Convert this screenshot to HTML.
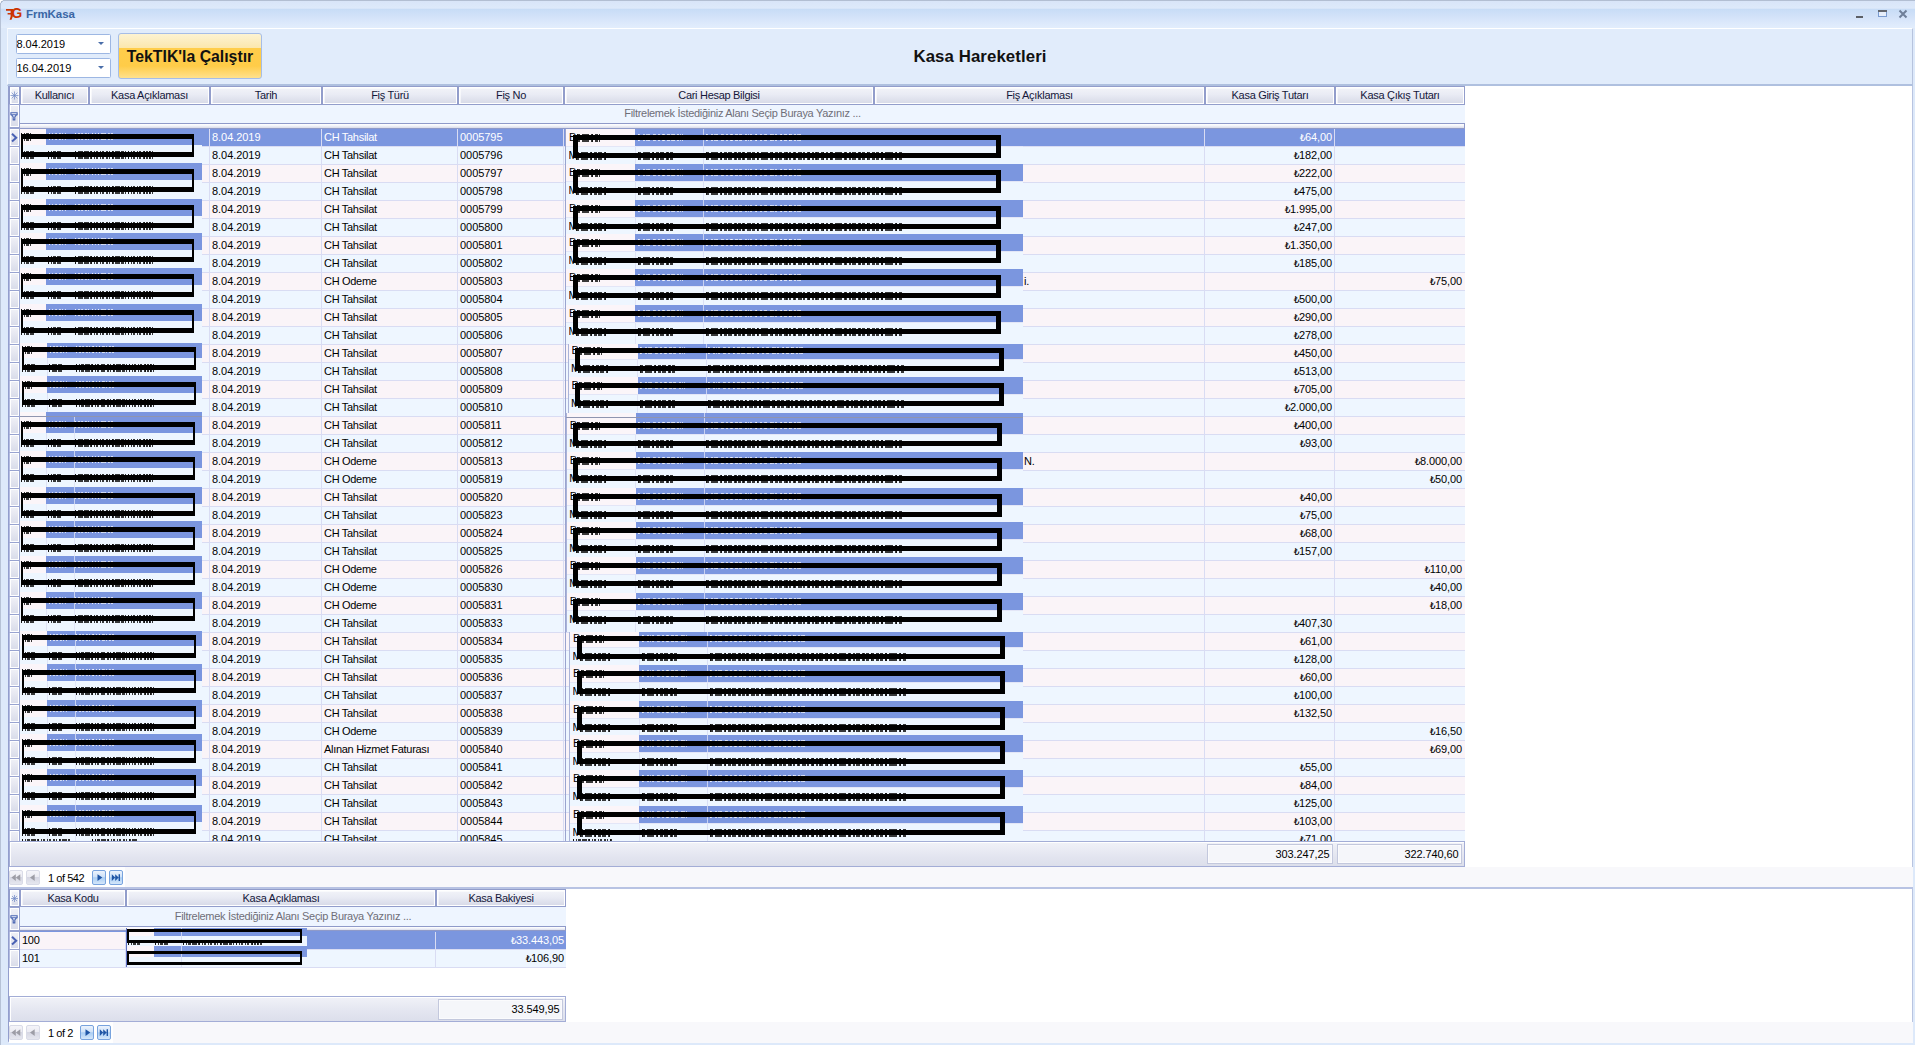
<!DOCTYPE html><html lang="tr"><head><meta charset="utf-8"><title>FrmKasa</title><style>
*{box-sizing:border-box;margin:0;padding:0}
html,body{width:1915px;height:1045px;overflow:hidden}
body{position:relative;background:#dde9fa;font-family:"Liberation Sans","DejaVu Sans",sans-serif;font-size:11px;color:#000;letter-spacing:-0.3px}
.abs{position:absolute}
#frameT{left:0;top:0;width:1915px;height:9px;background:linear-gradient(#b2bed2 0,#b2bed2 1px,#d9e5f8 1px,#dde9fa 8px,#d2e1f7 9px)}
#title{left:1px;top:9px;width:1914px;height:19px;background:linear-gradient(#c7dcf6 0,#d4e3f9 45%,#dfebfc 85%,#e2edfc 100%)}
#frameL{left:0;top:0;width:1px;height:1045px;background:#b6c2d6}
#ttl{left:26px;top:8px;font-weight:bold;font-size:11.5px;color:#3a66a5;letter-spacing:-0.05px}
#panel{left:7px;top:28px;width:1906px;height:58px;background:#e1ecfb;border-top:1px solid #fff;border-left:1px solid #f4f8fe;border-right:1px solid #b7c3dd;border-bottom:2px solid #afc0df}
.date{left:16px;width:95px;height:20px;background:#fff;border:1px solid #9db7e3;border-radius:1.5px;font-size:11px;line-height:18px;padding-left:0;text-indent:-0.6px;letter-spacing:-0.02px}
.date i{position:absolute;right:6px;top:7px;width:0;height:0;border-left:3px solid transparent;border-right:3px solid transparent;border-top:3.5px solid #4a6ea9}
#btn{left:118px;top:33px;width:144px;height:46px;border:1px solid #a6bde6;border-radius:3px;background:linear-gradient(#fdf3d2 0,#fbe7ae 14px,#ffcd4b 14.5px,#ffcc48 32px,#ffe18d 44px);font-weight:bold;font-size:15.8px;letter-spacing:0;text-align:center;line-height:45px;color:#111}
#h1{left:780px;top:47px;width:400px;text-align:center;font-weight:bold;font-size:16.8px;letter-spacing:0.1px;color:#111;line-height:20px}
#main{left:8px;top:86px;width:1905px;height:956px;background:#fff;border-left:1px solid #939ecd;border-right:1px solid #b9c4e0;border-bottom:1px solid #b9c4e0}
.hd{top:86px;height:19px;border:1px solid #929dcb;background:linear-gradient(#f3f4f9,#e9ebf4 45%,#d6d9e7);text-align:center;line-height:17px;color:#14173a;box-shadow:inset 0 0 0 1px #fff,inset 1px 1px 0 1px rgba(255,255,255,.6)}
.flt{height:19px;background:#eef5ff;color:#6e6e78;text-align:center;line-height:18px}
.ind{left:9px;width:11px;background:linear-gradient(#f0f1f7,#d8dbe9);border:1px solid #98a3d0;border-left-color:#b4bce0;box-shadow:inset 0 0 0 1px #fff}
.r{left:20px;height:18px;border-top:1px solid #d9dcf3;width:1445px}
.r.e{background:#faf4f8}
.r.o{background:#eef6ff}
.r.s{background:#7b96df;color:#fff;border-top-color:#7b96df}
.c{position:absolute;top:0;height:17px;line-height:17px;border-left:1px solid #d9dcf3;padding:0 2px;white-space:nowrap;overflow:hidden}
.c.n{text-align:right;padding-right:2px;letter-spacing:-0.1px}
.c.d{letter-spacing:-0.05px}
.lira{font-size:9px;letter-spacing:-0.5px}
.ft{background:linear-gradient(#f1f2f8,#e3e5f0 60%,#dcdfeb);border:1px solid #a3add6;box-shadow:inset 1px 1px 0 #fff}
.sum{background:#f5f6fa;border:1px solid #c3c8dd;text-align:right;line-height:18px;padding-right:2.5px;letter-spacing:-0.1px;height:20px;box-shadow:inset 0 0 0 1px #fbfbfd}
.nav{background:#f8f8fb;height:21px}
.nb{top:3px;width:14px;height:15px;border:1px solid #d9dbe7;border-radius:2px;background:linear-gradient(#f4f4f9 0,#ececf3 45%,#d6d7e3 50%,#e6e7ef 100%)}
.nb.a{border-color:#78a3de;background:linear-gradient(#ecf3fd 0,#cfe2f8 45%,#a9cdf3 52%,#d5e7fa 100%)}
.nb svg{position:absolute;left:0;top:0}
.dk{background:repeating-linear-gradient(90deg,rgba(12,12,12,.82) 0,rgba(12,12,12,.82) 1.4px,transparent 1.4px,transparent 3.1px),repeating-linear-gradient(90deg,rgba(12,12,12,.82) 0,rgba(12,12,12,.82) 1px,transparent 1px,transparent 5.3px)}
.wh{background:repeating-linear-gradient(90deg,rgba(255,255,255,.7) 0,rgba(255,255,255,.7) 1.2px,transparent 1.2px,transparent 3.3px),repeating-linear-gradient(90deg,rgba(255,255,255,.6) 0,rgba(255,255,255,.6) 1px,transparent 1px,transparent 5.7px)}
.dk2{background:repeating-linear-gradient(90deg,rgba(12,12,12,.82) 0,rgba(12,12,12,.82) 2.6px,transparent 2.6px,transparent 4.6px),repeating-linear-gradient(90deg,rgba(12,12,12,.82) 0,rgba(12,12,12,.82) 1.4px,transparent 1.4px,transparent 7.3px)}
.wh2{background:repeating-linear-gradient(90deg,rgba(255,255,255,.7) 0,rgba(255,255,255,.7) 2.2px,transparent 2.2px,transparent 4.9px),repeating-linear-gradient(90deg,rgba(255,255,255,.6) 0,rgba(255,255,255,.6) 1.2px,transparent 1.2px,transparent 8.3px)}
.blk{position:absolute;border-style:solid;border-color:#000}
.pt{position:absolute;overflow:hidden}
</style></head><body>
<div class="abs" id="frameT"></div><div class="abs" id="title"></div><div class="abs" id="frameL"></div>
<svg class="abs" style="left:5px;top:7px" width="18" height="14" viewBox="0 0 18 14"><text x="6.6" y="11.2" font-family="Liberation Sans,sans-serif" font-weight="bold" font-size="13.8" fill="#cc3300" letter-spacing="0">G</text><path d="M1 2h7v1.7H1zM2.6 6h5.4v1.6H2.6zM5.6 2h2.2v7.6l-1.3 3.2H4.6l1-3.2z" fill="#cc3300"/></svg>
<div class="abs" style="left:0;top:0;width:5px;height:5px;background:radial-gradient(circle at 5px 5px,rgba(255,255,255,0) 4px,#b2bed2 4px,#b2bed2 5px,#fff 5.2px)"></div>
<div class="abs" id="ttl">FrmKasa</div>
<svg class="abs" style="left:1850px;top:8px" width="62" height="14" viewBox="0 0 62 14"><rect x="6" y="8" width="7" height="2" fill="#5c5f66"/><rect x="28.5" y="2.5" width="8" height="6" fill="#e6eefb" stroke="#7a9bd0"/><rect x="28" y="2" width="9" height="2" fill="#62666e"/><path d="M49.5 2.5l7 7M56.5 2.5l-7 7" stroke="#6f7f99" stroke-width="2" fill="none"/></svg>
<div class="abs" id="panel"></div>
<div class="abs date" style="top:34px">8.04.2019<i></i></div>
<div class="abs date" style="top:58px">16.04.2019<i></i></div>
<div class="abs" id="btn">TekTIK'la Çalıştır</div>
<div class="abs" id="h1">Kasa Hareketleri</div>
<div class="abs" id="main"></div>
<div class="abs hd" style="left:9px;width:11px"></div>
<svg class="abs" style="left:10px;top:91px" width="9" height="9" viewBox="0 0 9 9"><path d="M4.5 0.5v8M0.5 4.5h8M1.6 1.6l5.8 5.8M7.4 1.6L1.6 7.4" stroke="#6f88c4" stroke-width="0.7" fill="none"/></svg>
<div class="abs hd" style="left:20px;width:69px">Kullanıcı</div>
<div class="abs hd" style="left:89px;width:121px">Kasa Açıklaması</div>
<div class="abs hd" style="left:210px;width:112px">Tarih</div>
<div class="abs hd" style="left:322px;width:136px">Fiş Türü</div>
<div class="abs hd" style="left:458px;width:106px">Fiş No</div>
<div class="abs hd" style="left:564px;width:310px">Cari Hesap Bilgisi</div>
<div class="abs hd" style="left:874px;width:331px">Fiş Açıklaması</div>
<div class="abs hd" style="left:1205px;width:130px">Kasa Giriş Tutarı</div>
<div class="abs hd" style="left:1335px;width:130px">Kasa Çıkış Tutarı</div>
<div class="abs ind" style="top:104px;height:24px"></div>
<svg class="abs" style="left:9.8px;top:111px" width="8" height="10" viewBox="0 0 8 10"><path d="M0.9 1.7h6.2v2h-6.2zM1.3 3.7l1.9 2.3v2.8h1.6v-2.8l1.9-2.3" fill="#f4f6fc" stroke="#4a66b2" stroke-width="1.15"/></svg>
<div class="abs flt" style="left:20px;top:105px;width:1445px;height:18px;line-height:16px">Filtrelemek İstediğiniz Alanı Seçip Buraya Yazınız ...</div>
<div class="abs" style="left:9px;top:128px;width:1456px;height:713px;overflow:hidden">
<div class="abs ind" style="left:0;top:0px;height:19px"></div>
<div class="abs r s" style="left:11px;top:0px"><div class="c" style="left:0px;width:68px;border-left:0"></div><div class="c" style="left:68px;width:121px"></div><div class="c d" style="left:189px;width:112px">8.04.2019</div><div class="c" style="left:301px;width:136px">CH Tahsilat</div><div class="c d" style="left:437px;width:106px">0005795</div><div class="c" style="left:543px;width:310px"></div><div class="c" style="left:853px;width:331px"></div><div class="c n" style="left:1184px;width:130px"><span class="lira">₺</span>64,00</div><div class="c n" style="left:1314px;width:130px"></div></div>
<div class="abs ind" style="left:0;top:18px;height:19px"></div>
<div class="abs r o" style="left:11px;top:18px"><div class="c" style="left:0px;width:68px;border-left:0"></div><div class="c" style="left:68px;width:121px"></div><div class="c d" style="left:189px;width:112px">8.04.2019</div><div class="c" style="left:301px;width:136px">CH Tahsilat</div><div class="c d" style="left:437px;width:106px">0005796</div><div class="c" style="left:543px;width:310px"></div><div class="c" style="left:853px;width:331px"></div><div class="c n" style="left:1184px;width:130px"><span class="lira">₺</span>182,00</div><div class="c n" style="left:1314px;width:130px"></div></div>
<div class="abs ind" style="left:0;top:36px;height:19px"></div>
<div class="abs r e" style="left:11px;top:36px"><div class="c" style="left:0px;width:68px;border-left:0"></div><div class="c" style="left:68px;width:121px"></div><div class="c d" style="left:189px;width:112px">8.04.2019</div><div class="c" style="left:301px;width:136px">CH Tahsilat</div><div class="c d" style="left:437px;width:106px">0005797</div><div class="c" style="left:543px;width:310px"></div><div class="c" style="left:853px;width:331px"></div><div class="c n" style="left:1184px;width:130px"><span class="lira">₺</span>222,00</div><div class="c n" style="left:1314px;width:130px"></div></div>
<div class="abs ind" style="left:0;top:54px;height:19px"></div>
<div class="abs r o" style="left:11px;top:54px"><div class="c" style="left:0px;width:68px;border-left:0"></div><div class="c" style="left:68px;width:121px"></div><div class="c d" style="left:189px;width:112px">8.04.2019</div><div class="c" style="left:301px;width:136px">CH Tahsilat</div><div class="c d" style="left:437px;width:106px">0005798</div><div class="c" style="left:543px;width:310px"></div><div class="c" style="left:853px;width:331px"></div><div class="c n" style="left:1184px;width:130px"><span class="lira">₺</span>475,00</div><div class="c n" style="left:1314px;width:130px"></div></div>
<div class="abs ind" style="left:0;top:72px;height:19px"></div>
<div class="abs r e" style="left:11px;top:72px"><div class="c" style="left:0px;width:68px;border-left:0"></div><div class="c" style="left:68px;width:121px"></div><div class="c d" style="left:189px;width:112px">8.04.2019</div><div class="c" style="left:301px;width:136px">CH Tahsilat</div><div class="c d" style="left:437px;width:106px">0005799</div><div class="c" style="left:543px;width:310px"></div><div class="c" style="left:853px;width:331px"></div><div class="c n" style="left:1184px;width:130px"><span class="lira">₺</span>1.995,00</div><div class="c n" style="left:1314px;width:130px"></div></div>
<div class="abs ind" style="left:0;top:90px;height:19px"></div>
<div class="abs r o" style="left:11px;top:90px"><div class="c" style="left:0px;width:68px;border-left:0"></div><div class="c" style="left:68px;width:121px"></div><div class="c d" style="left:189px;width:112px">8.04.2019</div><div class="c" style="left:301px;width:136px">CH Tahsilat</div><div class="c d" style="left:437px;width:106px">0005800</div><div class="c" style="left:543px;width:310px"></div><div class="c" style="left:853px;width:331px"></div><div class="c n" style="left:1184px;width:130px"><span class="lira">₺</span>247,00</div><div class="c n" style="left:1314px;width:130px"></div></div>
<div class="abs ind" style="left:0;top:108px;height:19px"></div>
<div class="abs r e" style="left:11px;top:108px"><div class="c" style="left:0px;width:68px;border-left:0"></div><div class="c" style="left:68px;width:121px"></div><div class="c d" style="left:189px;width:112px">8.04.2019</div><div class="c" style="left:301px;width:136px">CH Tahsilat</div><div class="c d" style="left:437px;width:106px">0005801</div><div class="c" style="left:543px;width:310px"></div><div class="c" style="left:853px;width:331px"></div><div class="c n" style="left:1184px;width:130px"><span class="lira">₺</span>1.350,00</div><div class="c n" style="left:1314px;width:130px"></div></div>
<div class="abs ind" style="left:0;top:126px;height:19px"></div>
<div class="abs r o" style="left:11px;top:126px"><div class="c" style="left:0px;width:68px;border-left:0"></div><div class="c" style="left:68px;width:121px"></div><div class="c d" style="left:189px;width:112px">8.04.2019</div><div class="c" style="left:301px;width:136px">CH Tahsilat</div><div class="c d" style="left:437px;width:106px">0005802</div><div class="c" style="left:543px;width:310px"></div><div class="c" style="left:853px;width:331px"></div><div class="c n" style="left:1184px;width:130px"><span class="lira">₺</span>185,00</div><div class="c n" style="left:1314px;width:130px"></div></div>
<div class="abs ind" style="left:0;top:144px;height:19px"></div>
<div class="abs r e" style="left:11px;top:144px"><div class="c" style="left:0px;width:68px;border-left:0"></div><div class="c" style="left:68px;width:121px"></div><div class="c d" style="left:189px;width:112px">8.04.2019</div><div class="c" style="left:301px;width:136px">CH Odeme</div><div class="c d" style="left:437px;width:106px">0005803</div><div class="c" style="left:543px;width:310px"></div><div class="c" style="left:853px;width:331px"></div><div class="c n" style="left:1184px;width:130px"></div><div class="c n" style="left:1314px;width:130px"><span class="lira">₺</span>75,00</div></div>
<div class="abs ind" style="left:0;top:162px;height:19px"></div>
<div class="abs r o" style="left:11px;top:162px"><div class="c" style="left:0px;width:68px;border-left:0"></div><div class="c" style="left:68px;width:121px"></div><div class="c d" style="left:189px;width:112px">8.04.2019</div><div class="c" style="left:301px;width:136px">CH Tahsilat</div><div class="c d" style="left:437px;width:106px">0005804</div><div class="c" style="left:543px;width:310px"></div><div class="c" style="left:853px;width:331px"></div><div class="c n" style="left:1184px;width:130px"><span class="lira">₺</span>500,00</div><div class="c n" style="left:1314px;width:130px"></div></div>
<div class="abs ind" style="left:0;top:180px;height:19px"></div>
<div class="abs r e" style="left:11px;top:180px"><div class="c" style="left:0px;width:68px;border-left:0"></div><div class="c" style="left:68px;width:121px"></div><div class="c d" style="left:189px;width:112px">8.04.2019</div><div class="c" style="left:301px;width:136px">CH Tahsilat</div><div class="c d" style="left:437px;width:106px">0005805</div><div class="c" style="left:543px;width:310px"></div><div class="c" style="left:853px;width:331px"></div><div class="c n" style="left:1184px;width:130px"><span class="lira">₺</span>290,00</div><div class="c n" style="left:1314px;width:130px"></div></div>
<div class="abs ind" style="left:0;top:198px;height:19px"></div>
<div class="abs r o" style="left:11px;top:198px"><div class="c" style="left:0px;width:68px;border-left:0"></div><div class="c" style="left:68px;width:121px"></div><div class="c d" style="left:189px;width:112px">8.04.2019</div><div class="c" style="left:301px;width:136px">CH Tahsilat</div><div class="c d" style="left:437px;width:106px">0005806</div><div class="c" style="left:543px;width:310px"></div><div class="c" style="left:853px;width:331px"></div><div class="c n" style="left:1184px;width:130px"><span class="lira">₺</span>278,00</div><div class="c n" style="left:1314px;width:130px"></div></div>
<div class="abs ind" style="left:0;top:216px;height:19px"></div>
<div class="abs r e" style="left:11px;top:216px"><div class="c" style="left:0px;width:68px;border-left:0"></div><div class="c" style="left:68px;width:121px"></div><div class="c d" style="left:189px;width:112px">8.04.2019</div><div class="c" style="left:301px;width:136px">CH Tahsilat</div><div class="c d" style="left:437px;width:106px">0005807</div><div class="c" style="left:543px;width:310px"></div><div class="c" style="left:853px;width:331px"></div><div class="c n" style="left:1184px;width:130px"><span class="lira">₺</span>450,00</div><div class="c n" style="left:1314px;width:130px"></div></div>
<div class="abs ind" style="left:0;top:234px;height:19px"></div>
<div class="abs r o" style="left:11px;top:234px"><div class="c" style="left:0px;width:68px;border-left:0"></div><div class="c" style="left:68px;width:121px"></div><div class="c d" style="left:189px;width:112px">8.04.2019</div><div class="c" style="left:301px;width:136px">CH Tahsilat</div><div class="c d" style="left:437px;width:106px">0005808</div><div class="c" style="left:543px;width:310px"></div><div class="c" style="left:853px;width:331px"></div><div class="c n" style="left:1184px;width:130px"><span class="lira">₺</span>513,00</div><div class="c n" style="left:1314px;width:130px"></div></div>
<div class="abs ind" style="left:0;top:252px;height:19px"></div>
<div class="abs r e" style="left:11px;top:252px"><div class="c" style="left:0px;width:68px;border-left:0"></div><div class="c" style="left:68px;width:121px"></div><div class="c d" style="left:189px;width:112px">8.04.2019</div><div class="c" style="left:301px;width:136px">CH Tahsilat</div><div class="c d" style="left:437px;width:106px">0005809</div><div class="c" style="left:543px;width:310px"></div><div class="c" style="left:853px;width:331px"></div><div class="c n" style="left:1184px;width:130px"><span class="lira">₺</span>705,00</div><div class="c n" style="left:1314px;width:130px"></div></div>
<div class="abs ind" style="left:0;top:270px;height:19px"></div>
<div class="abs r o" style="left:11px;top:270px"><div class="c" style="left:0px;width:68px;border-left:0"></div><div class="c" style="left:68px;width:121px"></div><div class="c d" style="left:189px;width:112px">8.04.2019</div><div class="c" style="left:301px;width:136px">CH Tahsilat</div><div class="c d" style="left:437px;width:106px">0005810</div><div class="c" style="left:543px;width:310px"></div><div class="c" style="left:853px;width:331px"></div><div class="c n" style="left:1184px;width:130px"><span class="lira">₺</span>2.000,00</div><div class="c n" style="left:1314px;width:130px"></div></div>
<div class="abs ind" style="left:0;top:288px;height:19px"></div>
<div class="abs r e" style="left:11px;top:288px"><div class="c" style="left:0px;width:68px;border-left:0"></div><div class="c" style="left:68px;width:121px"></div><div class="c d" style="left:189px;width:112px">8.04.2019</div><div class="c" style="left:301px;width:136px">CH Tahsilat</div><div class="c d" style="left:437px;width:106px">0005811</div><div class="c" style="left:543px;width:310px"></div><div class="c" style="left:853px;width:331px"></div><div class="c n" style="left:1184px;width:130px"><span class="lira">₺</span>400,00</div><div class="c n" style="left:1314px;width:130px"></div></div>
<div class="abs ind" style="left:0;top:306px;height:19px"></div>
<div class="abs r o" style="left:11px;top:306px"><div class="c" style="left:0px;width:68px;border-left:0"></div><div class="c" style="left:68px;width:121px"></div><div class="c d" style="left:189px;width:112px">8.04.2019</div><div class="c" style="left:301px;width:136px">CH Tahsilat</div><div class="c d" style="left:437px;width:106px">0005812</div><div class="c" style="left:543px;width:310px"></div><div class="c" style="left:853px;width:331px"></div><div class="c n" style="left:1184px;width:130px"><span class="lira">₺</span>93,00</div><div class="c n" style="left:1314px;width:130px"></div></div>
<div class="abs ind" style="left:0;top:324px;height:19px"></div>
<div class="abs r e" style="left:11px;top:324px"><div class="c" style="left:0px;width:68px;border-left:0"></div><div class="c" style="left:68px;width:121px"></div><div class="c d" style="left:189px;width:112px">8.04.2019</div><div class="c" style="left:301px;width:136px">CH Odeme</div><div class="c d" style="left:437px;width:106px">0005813</div><div class="c" style="left:543px;width:310px"></div><div class="c" style="left:853px;width:331px"></div><div class="c n" style="left:1184px;width:130px"></div><div class="c n" style="left:1314px;width:130px"><span class="lira">₺</span>8.000,00</div></div>
<div class="abs ind" style="left:0;top:342px;height:19px"></div>
<div class="abs r o" style="left:11px;top:342px"><div class="c" style="left:0px;width:68px;border-left:0"></div><div class="c" style="left:68px;width:121px"></div><div class="c d" style="left:189px;width:112px">8.04.2019</div><div class="c" style="left:301px;width:136px">CH Odeme</div><div class="c d" style="left:437px;width:106px">0005819</div><div class="c" style="left:543px;width:310px"></div><div class="c" style="left:853px;width:331px"></div><div class="c n" style="left:1184px;width:130px"></div><div class="c n" style="left:1314px;width:130px"><span class="lira">₺</span>50,00</div></div>
<div class="abs ind" style="left:0;top:360px;height:19px"></div>
<div class="abs r e" style="left:11px;top:360px"><div class="c" style="left:0px;width:68px;border-left:0"></div><div class="c" style="left:68px;width:121px"></div><div class="c d" style="left:189px;width:112px">8.04.2019</div><div class="c" style="left:301px;width:136px">CH Tahsilat</div><div class="c d" style="left:437px;width:106px">0005820</div><div class="c" style="left:543px;width:310px"></div><div class="c" style="left:853px;width:331px"></div><div class="c n" style="left:1184px;width:130px"><span class="lira">₺</span>40,00</div><div class="c n" style="left:1314px;width:130px"></div></div>
<div class="abs ind" style="left:0;top:378px;height:19px"></div>
<div class="abs r o" style="left:11px;top:378px"><div class="c" style="left:0px;width:68px;border-left:0"></div><div class="c" style="left:68px;width:121px"></div><div class="c d" style="left:189px;width:112px">8.04.2019</div><div class="c" style="left:301px;width:136px">CH Tahsilat</div><div class="c d" style="left:437px;width:106px">0005823</div><div class="c" style="left:543px;width:310px"></div><div class="c" style="left:853px;width:331px"></div><div class="c n" style="left:1184px;width:130px"><span class="lira">₺</span>75,00</div><div class="c n" style="left:1314px;width:130px"></div></div>
<div class="abs ind" style="left:0;top:396px;height:19px"></div>
<div class="abs r e" style="left:11px;top:396px"><div class="c" style="left:0px;width:68px;border-left:0"></div><div class="c" style="left:68px;width:121px"></div><div class="c d" style="left:189px;width:112px">8.04.2019</div><div class="c" style="left:301px;width:136px">CH Tahsilat</div><div class="c d" style="left:437px;width:106px">0005824</div><div class="c" style="left:543px;width:310px"></div><div class="c" style="left:853px;width:331px"></div><div class="c n" style="left:1184px;width:130px"><span class="lira">₺</span>68,00</div><div class="c n" style="left:1314px;width:130px"></div></div>
<div class="abs ind" style="left:0;top:414px;height:19px"></div>
<div class="abs r o" style="left:11px;top:414px"><div class="c" style="left:0px;width:68px;border-left:0"></div><div class="c" style="left:68px;width:121px"></div><div class="c d" style="left:189px;width:112px">8.04.2019</div><div class="c" style="left:301px;width:136px">CH Tahsilat</div><div class="c d" style="left:437px;width:106px">0005825</div><div class="c" style="left:543px;width:310px"></div><div class="c" style="left:853px;width:331px"></div><div class="c n" style="left:1184px;width:130px"><span class="lira">₺</span>157,00</div><div class="c n" style="left:1314px;width:130px"></div></div>
<div class="abs ind" style="left:0;top:432px;height:19px"></div>
<div class="abs r e" style="left:11px;top:432px"><div class="c" style="left:0px;width:68px;border-left:0"></div><div class="c" style="left:68px;width:121px"></div><div class="c d" style="left:189px;width:112px">8.04.2019</div><div class="c" style="left:301px;width:136px">CH Odeme</div><div class="c d" style="left:437px;width:106px">0005826</div><div class="c" style="left:543px;width:310px"></div><div class="c" style="left:853px;width:331px"></div><div class="c n" style="left:1184px;width:130px"></div><div class="c n" style="left:1314px;width:130px"><span class="lira">₺</span>110,00</div></div>
<div class="abs ind" style="left:0;top:450px;height:19px"></div>
<div class="abs r o" style="left:11px;top:450px"><div class="c" style="left:0px;width:68px;border-left:0"></div><div class="c" style="left:68px;width:121px"></div><div class="c d" style="left:189px;width:112px">8.04.2019</div><div class="c" style="left:301px;width:136px">CH Odeme</div><div class="c d" style="left:437px;width:106px">0005830</div><div class="c" style="left:543px;width:310px"></div><div class="c" style="left:853px;width:331px"></div><div class="c n" style="left:1184px;width:130px"></div><div class="c n" style="left:1314px;width:130px"><span class="lira">₺</span>40,00</div></div>
<div class="abs ind" style="left:0;top:468px;height:19px"></div>
<div class="abs r e" style="left:11px;top:468px"><div class="c" style="left:0px;width:68px;border-left:0"></div><div class="c" style="left:68px;width:121px"></div><div class="c d" style="left:189px;width:112px">8.04.2019</div><div class="c" style="left:301px;width:136px">CH Odeme</div><div class="c d" style="left:437px;width:106px">0005831</div><div class="c" style="left:543px;width:310px"></div><div class="c" style="left:853px;width:331px"></div><div class="c n" style="left:1184px;width:130px"></div><div class="c n" style="left:1314px;width:130px"><span class="lira">₺</span>18,00</div></div>
<div class="abs ind" style="left:0;top:486px;height:19px"></div>
<div class="abs r o" style="left:11px;top:486px"><div class="c" style="left:0px;width:68px;border-left:0"></div><div class="c" style="left:68px;width:121px"></div><div class="c d" style="left:189px;width:112px">8.04.2019</div><div class="c" style="left:301px;width:136px">CH Tahsilat</div><div class="c d" style="left:437px;width:106px">0005833</div><div class="c" style="left:543px;width:310px"></div><div class="c" style="left:853px;width:331px"></div><div class="c n" style="left:1184px;width:130px"><span class="lira">₺</span>407,30</div><div class="c n" style="left:1314px;width:130px"></div></div>
<div class="abs ind" style="left:0;top:504px;height:19px"></div>
<div class="abs r e" style="left:11px;top:504px"><div class="c" style="left:0px;width:68px;border-left:0"></div><div class="c" style="left:68px;width:121px"></div><div class="c d" style="left:189px;width:112px">8.04.2019</div><div class="c" style="left:301px;width:136px">CH Tahsilat</div><div class="c d" style="left:437px;width:106px">0005834</div><div class="c" style="left:543px;width:310px"></div><div class="c" style="left:853px;width:331px"></div><div class="c n" style="left:1184px;width:130px"><span class="lira">₺</span>61,00</div><div class="c n" style="left:1314px;width:130px"></div></div>
<div class="abs ind" style="left:0;top:522px;height:19px"></div>
<div class="abs r o" style="left:11px;top:522px"><div class="c" style="left:0px;width:68px;border-left:0"></div><div class="c" style="left:68px;width:121px"></div><div class="c d" style="left:189px;width:112px">8.04.2019</div><div class="c" style="left:301px;width:136px">CH Tahsilat</div><div class="c d" style="left:437px;width:106px">0005835</div><div class="c" style="left:543px;width:310px"></div><div class="c" style="left:853px;width:331px"></div><div class="c n" style="left:1184px;width:130px"><span class="lira">₺</span>128,00</div><div class="c n" style="left:1314px;width:130px"></div></div>
<div class="abs ind" style="left:0;top:540px;height:19px"></div>
<div class="abs r e" style="left:11px;top:540px"><div class="c" style="left:0px;width:68px;border-left:0"></div><div class="c" style="left:68px;width:121px"></div><div class="c d" style="left:189px;width:112px">8.04.2019</div><div class="c" style="left:301px;width:136px">CH Tahsilat</div><div class="c d" style="left:437px;width:106px">0005836</div><div class="c" style="left:543px;width:310px"></div><div class="c" style="left:853px;width:331px"></div><div class="c n" style="left:1184px;width:130px"><span class="lira">₺</span>60,00</div><div class="c n" style="left:1314px;width:130px"></div></div>
<div class="abs ind" style="left:0;top:558px;height:19px"></div>
<div class="abs r o" style="left:11px;top:558px"><div class="c" style="left:0px;width:68px;border-left:0"></div><div class="c" style="left:68px;width:121px"></div><div class="c d" style="left:189px;width:112px">8.04.2019</div><div class="c" style="left:301px;width:136px">CH Tahsilat</div><div class="c d" style="left:437px;width:106px">0005837</div><div class="c" style="left:543px;width:310px"></div><div class="c" style="left:853px;width:331px"></div><div class="c n" style="left:1184px;width:130px"><span class="lira">₺</span>100,00</div><div class="c n" style="left:1314px;width:130px"></div></div>
<div class="abs ind" style="left:0;top:576px;height:19px"></div>
<div class="abs r e" style="left:11px;top:576px"><div class="c" style="left:0px;width:68px;border-left:0"></div><div class="c" style="left:68px;width:121px"></div><div class="c d" style="left:189px;width:112px">8.04.2019</div><div class="c" style="left:301px;width:136px">CH Tahsilat</div><div class="c d" style="left:437px;width:106px">0005838</div><div class="c" style="left:543px;width:310px"></div><div class="c" style="left:853px;width:331px"></div><div class="c n" style="left:1184px;width:130px"><span class="lira">₺</span>132,50</div><div class="c n" style="left:1314px;width:130px"></div></div>
<div class="abs ind" style="left:0;top:594px;height:19px"></div>
<div class="abs r o" style="left:11px;top:594px"><div class="c" style="left:0px;width:68px;border-left:0"></div><div class="c" style="left:68px;width:121px"></div><div class="c d" style="left:189px;width:112px">8.04.2019</div><div class="c" style="left:301px;width:136px">CH Odeme</div><div class="c d" style="left:437px;width:106px">0005839</div><div class="c" style="left:543px;width:310px"></div><div class="c" style="left:853px;width:331px"></div><div class="c n" style="left:1184px;width:130px"></div><div class="c n" style="left:1314px;width:130px"><span class="lira">₺</span>16,50</div></div>
<div class="abs ind" style="left:0;top:612px;height:19px"></div>
<div class="abs r e" style="left:11px;top:612px"><div class="c" style="left:0px;width:68px;border-left:0"></div><div class="c" style="left:68px;width:121px"></div><div class="c d" style="left:189px;width:112px">8.04.2019</div><div class="c" style="left:301px;width:136px">Alınan Hizmet Faturası</div><div class="c d" style="left:437px;width:106px">0005840</div><div class="c" style="left:543px;width:310px"></div><div class="c" style="left:853px;width:331px"></div><div class="c n" style="left:1184px;width:130px"></div><div class="c n" style="left:1314px;width:130px"><span class="lira">₺</span>69,00</div></div>
<div class="abs ind" style="left:0;top:630px;height:19px"></div>
<div class="abs r o" style="left:11px;top:630px"><div class="c" style="left:0px;width:68px;border-left:0"></div><div class="c" style="left:68px;width:121px"></div><div class="c d" style="left:189px;width:112px">8.04.2019</div><div class="c" style="left:301px;width:136px">CH Tahsilat</div><div class="c d" style="left:437px;width:106px">0005841</div><div class="c" style="left:543px;width:310px"></div><div class="c" style="left:853px;width:331px"></div><div class="c n" style="left:1184px;width:130px"><span class="lira">₺</span>55,00</div><div class="c n" style="left:1314px;width:130px"></div></div>
<div class="abs ind" style="left:0;top:648px;height:19px"></div>
<div class="abs r e" style="left:11px;top:648px"><div class="c" style="left:0px;width:68px;border-left:0"></div><div class="c" style="left:68px;width:121px"></div><div class="c d" style="left:189px;width:112px">8.04.2019</div><div class="c" style="left:301px;width:136px">CH Tahsilat</div><div class="c d" style="left:437px;width:106px">0005842</div><div class="c" style="left:543px;width:310px"></div><div class="c" style="left:853px;width:331px"></div><div class="c n" style="left:1184px;width:130px"><span class="lira">₺</span>84,00</div><div class="c n" style="left:1314px;width:130px"></div></div>
<div class="abs ind" style="left:0;top:666px;height:19px"></div>
<div class="abs r o" style="left:11px;top:666px"><div class="c" style="left:0px;width:68px;border-left:0"></div><div class="c" style="left:68px;width:121px"></div><div class="c d" style="left:189px;width:112px">8.04.2019</div><div class="c" style="left:301px;width:136px">CH Tahsilat</div><div class="c d" style="left:437px;width:106px">0005843</div><div class="c" style="left:543px;width:310px"></div><div class="c" style="left:853px;width:331px"></div><div class="c n" style="left:1184px;width:130px"><span class="lira">₺</span>125,00</div><div class="c n" style="left:1314px;width:130px"></div></div>
<div class="abs ind" style="left:0;top:684px;height:19px"></div>
<div class="abs r e" style="left:11px;top:684px"><div class="c" style="left:0px;width:68px;border-left:0"></div><div class="c" style="left:68px;width:121px"></div><div class="c d" style="left:189px;width:112px">8.04.2019</div><div class="c" style="left:301px;width:136px">CH Tahsilat</div><div class="c d" style="left:437px;width:106px">0005844</div><div class="c" style="left:543px;width:310px"></div><div class="c" style="left:853px;width:331px"></div><div class="c n" style="left:1184px;width:130px"><span class="lira">₺</span>103,00</div><div class="c n" style="left:1314px;width:130px"></div></div>
<div class="abs ind" style="left:0;top:702px;height:19px"></div>
<div class="abs r o" style="left:11px;top:702px"><div class="c" style="left:0px;width:68px;border-left:0"></div><div class="c" style="left:68px;width:121px"></div><div class="c d" style="left:189px;width:112px">8.04.2019</div><div class="c" style="left:301px;width:136px">CH Tahsilat</div><div class="c d" style="left:437px;width:106px">0005845</div><div class="c" style="left:543px;width:310px"></div><div class="c" style="left:853px;width:331px"></div><div class="c n" style="left:1184px;width:130px"><span class="lira">₺</span>71,00</div><div class="c n" style="left:1314px;width:130px"></div></div>
</div>
<svg class="abs" style="left:11px;top:132px" width="7" height="11" viewBox="0 0 7 11"><path d="M1 1.8l4.2 3.9L1 9.6" stroke="#4a62b4" stroke-width="2" fill="none"/></svg>
<div class="abs" style="left:0;top:128px;width:1465px;height:713px;overflow:hidden"><div class="abs" style="left:0;top:-128px;width:1465px;height:841px">
<div class="abs" style="left:20px;top:128px;width:182px;height:35px;background:#eef6ff"></div><div class="abs" style="left:20px;top:128px;width:26.200000000000003px;height:17px;background:#fbf5f9"></div><div class="abs" style="left:46.2px;top:128px;width:155.8px;height:17px;background:#7b96df"></div><div class="abs dk" style="left:20.7px;top:133px;width:10px;height:7.6px"></div><div class="abs wh" style="left:48.7px;top:133.2px;width:17px;height:7px"></div><div class="abs wh" style="left:74.7px;top:133.2px;width:38px;height:7px"></div><div class="abs dk" style="left:20.7px;top:151px;width:13px;height:7.8px"></div><div class="abs dk" style="left:47.7px;top:151px;width:13px;height:7.8px"></div><div class="abs dk" style="left:74.7px;top:151px;width:78px;height:7.8px"></div><div class="blk" style="left:20.7px;top:134px;width:173px;height:23px;border-width:5px 2px 5px 2px"></div>
<div class="abs" style="left:565.0px;top:129px;width:458.20000000000005px;height:35px;background:#eef6ff"></div><div class="abs" style="left:565.0px;top:129px;width:70.0px;height:17px;background:#fbf5f9"></div><div class="abs" style="left:635.0px;top:129px;width:388.20000000000005px;height:17px;background:#7b96df"></div><div class="abs" style="left:565.0px;top:129px;width:1px;height:35px;background:#aab3d8"></div><div class="abs" style="left:703.2px;top:129px;width:1px;height:35px;background:rgba(214,220,244,.85)"></div><div class="abs" style="left:634.5px;top:146px;width:1px;height:18px;background:#dfe3f5"></div><div class="abs" style="left:566.0px;top:146px;width:457.20000000000005px;height:1px;background:#e3e6f7"></div><div class="abs" style="left:569.0px;top:131px;width:9px;height:13px;line-height:13px;overflow:hidden;letter-spacing:0">B</div><div class="abs" style="left:568.5px;top:148.5px;width:9px;height:13px;line-height:13px;overflow:hidden;letter-spacing:0">M</div><div class="abs dk2" style="left:576.5px;top:134px;width:23px;height:7.6px"></div><div class="abs wh2" style="left:637.5px;top:134.2px;width:45px;height:7px"></div><div class="abs wh2" style="left:705.5px;top:134.2px;width:95px;height:7px"></div><div class="abs dk2" style="left:575.5px;top:152px;width:30px;height:7.8px"></div><div class="abs dk2" style="left:637.5px;top:152px;width:36px;height:7.8px"></div><div class="abs dk2" style="left:705.5px;top:152px;width:197px;height:7.8px"></div><div class="blk" style="left:572.5px;top:135px;width:428.5px;height:23px;border-width:5px"></div>
<div class="abs" style="left:20px;top:163px;width:182px;height:36px;background:#eef6ff"></div><div class="abs" style="left:20px;top:163px;width:26.200000000000003px;height:17px;background:#fbf5f9"></div><div class="abs" style="left:46.2px;top:163px;width:155.8px;height:17px;background:#7b96df"></div><div class="abs dk" style="left:20.7px;top:168px;width:10px;height:7.6px"></div><div class="abs wh" style="left:48.7px;top:168.2px;width:17px;height:7px"></div><div class="abs wh" style="left:74.7px;top:168.2px;width:38px;height:7px"></div><div class="abs dk" style="left:20.7px;top:186px;width:13px;height:7.8px"></div><div class="abs dk" style="left:47.7px;top:186px;width:13px;height:7.8px"></div><div class="abs dk" style="left:74.7px;top:186px;width:78px;height:7.8px"></div><div class="blk" style="left:20.7px;top:169px;width:173px;height:23px;border-width:5px 2px 5px 2px"></div>
<div class="abs" style="left:565.0px;top:164px;width:458.20000000000005px;height:36px;background:#eef6ff"></div><div class="abs" style="left:565.0px;top:164px;width:70.0px;height:17px;background:#fbf5f9"></div><div class="abs" style="left:635.0px;top:164px;width:388.20000000000005px;height:17px;background:#7b96df"></div><div class="abs" style="left:565.0px;top:164px;width:1px;height:36px;background:#aab3d8"></div><div class="abs" style="left:703.2px;top:164px;width:1px;height:36px;background:rgba(214,220,244,.85)"></div><div class="abs" style="left:634.5px;top:181px;width:1px;height:19px;background:#dfe3f5"></div><div class="abs" style="left:566.0px;top:181px;width:457.20000000000005px;height:1px;background:#e3e6f7"></div><div class="abs" style="left:569.0px;top:166px;width:9px;height:13px;line-height:13px;overflow:hidden;letter-spacing:0">B</div><div class="abs" style="left:568.5px;top:183.5px;width:9px;height:13px;line-height:13px;overflow:hidden;letter-spacing:0">M</div><div class="abs dk2" style="left:576.5px;top:169px;width:23px;height:7.6px"></div><div class="abs wh2" style="left:637.5px;top:169.2px;width:45px;height:7px"></div><div class="abs wh2" style="left:705.5px;top:169.2px;width:95px;height:7px"></div><div class="abs dk2" style="left:575.5px;top:187px;width:30px;height:7.8px"></div><div class="abs dk2" style="left:637.5px;top:187px;width:36px;height:7.8px"></div><div class="abs dk2" style="left:705.5px;top:187px;width:197px;height:7.8px"></div><div class="blk" style="left:572.5px;top:170px;width:428.5px;height:23px;border-width:5px"></div>
<div class="abs" style="left:20px;top:199px;width:182px;height:34px;background:#eef6ff"></div><div class="abs" style="left:20px;top:199px;width:26.200000000000003px;height:17px;background:#fbf5f9"></div><div class="abs" style="left:46.2px;top:199px;width:155.8px;height:17px;background:#7b96df"></div><div class="abs dk" style="left:20.7px;top:204px;width:10px;height:7.6px"></div><div class="abs wh" style="left:48.7px;top:204.2px;width:17px;height:7px"></div><div class="abs wh" style="left:74.7px;top:204.2px;width:38px;height:7px"></div><div class="abs dk" style="left:20.7px;top:222px;width:13px;height:7.8px"></div><div class="abs dk" style="left:47.7px;top:222px;width:13px;height:7.8px"></div><div class="abs dk" style="left:74.7px;top:222px;width:78px;height:7.8px"></div><div class="blk" style="left:20.7px;top:205px;width:173px;height:23px;border-width:5px 2px 5px 2px"></div>
<div class="abs" style="left:565.0px;top:200px;width:458.20000000000005px;height:34px;background:#eef6ff"></div><div class="abs" style="left:565.0px;top:200px;width:70.0px;height:17px;background:#fbf5f9"></div><div class="abs" style="left:635.0px;top:200px;width:388.20000000000005px;height:17px;background:#7b96df"></div><div class="abs" style="left:565.0px;top:200px;width:1px;height:34px;background:#aab3d8"></div><div class="abs" style="left:703.2px;top:200px;width:1px;height:34px;background:rgba(214,220,244,.85)"></div><div class="abs" style="left:634.5px;top:217px;width:1px;height:17px;background:#dfe3f5"></div><div class="abs" style="left:566.0px;top:217px;width:457.20000000000005px;height:1px;background:#e3e6f7"></div><div class="abs" style="left:569.0px;top:202px;width:9px;height:13px;line-height:13px;overflow:hidden;letter-spacing:0">B</div><div class="abs" style="left:568.5px;top:219.5px;width:9px;height:13px;line-height:13px;overflow:hidden;letter-spacing:0">M</div><div class="abs dk2" style="left:576.5px;top:205px;width:23px;height:7.6px"></div><div class="abs wh2" style="left:637.5px;top:205.2px;width:45px;height:7px"></div><div class="abs wh2" style="left:705.5px;top:205.2px;width:95px;height:7px"></div><div class="abs dk2" style="left:575.5px;top:223px;width:30px;height:7.8px"></div><div class="abs dk2" style="left:637.5px;top:223px;width:36px;height:7.8px"></div><div class="abs dk2" style="left:705.5px;top:223px;width:197px;height:7.8px"></div><div class="blk" style="left:572.5px;top:206px;width:428.5px;height:23px;border-width:5px"></div>
<div class="abs" style="left:20px;top:233px;width:182px;height:35px;background:#eef6ff"></div><div class="abs" style="left:20px;top:233px;width:26.200000000000003px;height:17px;background:#fbf5f9"></div><div class="abs" style="left:46.2px;top:233px;width:155.8px;height:17px;background:#7b96df"></div><div class="abs dk" style="left:20.7px;top:238px;width:10px;height:7.6px"></div><div class="abs wh" style="left:48.7px;top:238.2px;width:17px;height:7px"></div><div class="abs wh" style="left:74.7px;top:238.2px;width:38px;height:7px"></div><div class="abs dk" style="left:20.7px;top:256px;width:13px;height:7.8px"></div><div class="abs dk" style="left:47.7px;top:256px;width:13px;height:7.8px"></div><div class="abs dk" style="left:74.7px;top:256px;width:78px;height:7.8px"></div><div class="blk" style="left:20.7px;top:239px;width:173px;height:23px;border-width:5px 2px 5px 2px"></div>
<div class="abs" style="left:565.0px;top:234px;width:458.20000000000005px;height:35px;background:#eef6ff"></div><div class="abs" style="left:565.0px;top:234px;width:70.0px;height:17px;background:#fbf5f9"></div><div class="abs" style="left:635.0px;top:234px;width:388.20000000000005px;height:17px;background:#7b96df"></div><div class="abs" style="left:565.0px;top:234px;width:1px;height:35px;background:#aab3d8"></div><div class="abs" style="left:703.2px;top:234px;width:1px;height:35px;background:rgba(214,220,244,.85)"></div><div class="abs" style="left:634.5px;top:251px;width:1px;height:18px;background:#dfe3f5"></div><div class="abs" style="left:566.0px;top:251px;width:457.20000000000005px;height:1px;background:#e3e6f7"></div><div class="abs" style="left:569.0px;top:236px;width:9px;height:13px;line-height:13px;overflow:hidden;letter-spacing:0">B</div><div class="abs" style="left:568.5px;top:253.5px;width:9px;height:13px;line-height:13px;overflow:hidden;letter-spacing:0">M</div><div class="abs dk2" style="left:576.5px;top:239px;width:23px;height:7.6px"></div><div class="abs wh2" style="left:637.5px;top:239.2px;width:45px;height:7px"></div><div class="abs wh2" style="left:705.5px;top:239.2px;width:95px;height:7px"></div><div class="abs dk2" style="left:575.5px;top:257px;width:30px;height:7.8px"></div><div class="abs dk2" style="left:637.5px;top:257px;width:36px;height:7.8px"></div><div class="abs dk2" style="left:705.5px;top:257px;width:197px;height:7.8px"></div><div class="blk" style="left:572.5px;top:240px;width:428.5px;height:23px;border-width:5px"></div>
<div class="abs" style="left:20px;top:268px;width:182px;height:36px;background:#eef6ff"></div><div class="abs" style="left:20px;top:268px;width:26.200000000000003px;height:17px;background:#fbf5f9"></div><div class="abs" style="left:46.2px;top:268px;width:155.8px;height:17px;background:#7b96df"></div><div class="abs dk" style="left:20.7px;top:273px;width:10px;height:7.6px"></div><div class="abs wh" style="left:48.7px;top:273.2px;width:17px;height:7px"></div><div class="abs wh" style="left:74.7px;top:273.2px;width:38px;height:7px"></div><div class="abs dk" style="left:20.7px;top:291px;width:13px;height:7.8px"></div><div class="abs dk" style="left:47.7px;top:291px;width:13px;height:7.8px"></div><div class="abs dk" style="left:74.7px;top:291px;width:78px;height:7.8px"></div><div class="blk" style="left:20.7px;top:274px;width:173px;height:23px;border-width:5px 2px 5px 2px"></div>
<div class="abs" style="left:565.0px;top:269px;width:458.20000000000005px;height:36px;background:#eef6ff"></div><div class="abs" style="left:565.0px;top:269px;width:70.0px;height:17px;background:#fbf5f9"></div><div class="abs" style="left:635.0px;top:269px;width:388.20000000000005px;height:17px;background:#7b96df"></div><div class="abs" style="left:565.0px;top:269px;width:1px;height:36px;background:#aab3d8"></div><div class="abs" style="left:703.2px;top:269px;width:1px;height:36px;background:rgba(214,220,244,.85)"></div><div class="abs" style="left:634.5px;top:286px;width:1px;height:19px;background:#dfe3f5"></div><div class="abs" style="left:566.0px;top:286px;width:457.20000000000005px;height:1px;background:#e3e6f7"></div><div class="abs" style="left:569.0px;top:271px;width:9px;height:13px;line-height:13px;overflow:hidden;letter-spacing:0">B</div><div class="abs" style="left:568.5px;top:288.5px;width:9px;height:13px;line-height:13px;overflow:hidden;letter-spacing:0">M</div><div class="abs dk2" style="left:576.5px;top:274px;width:23px;height:7.6px"></div><div class="abs wh2" style="left:637.5px;top:274.2px;width:45px;height:7px"></div><div class="abs wh2" style="left:705.5px;top:274.2px;width:95px;height:7px"></div><div class="abs dk2" style="left:575.5px;top:292px;width:30px;height:7.8px"></div><div class="abs dk2" style="left:637.5px;top:292px;width:36px;height:7.8px"></div><div class="abs dk2" style="left:705.5px;top:292px;width:197px;height:7.8px"></div><div class="blk" style="left:572.5px;top:275px;width:428.5px;height:23px;border-width:5px"></div>
<div class="abs" style="left:20px;top:304px;width:182px;height:39px;background:#eef6ff"></div><div class="abs" style="left:20px;top:304px;width:26.200000000000003px;height:17px;background:#fbf5f9"></div><div class="abs" style="left:46.2px;top:304px;width:155.8px;height:17px;background:#7b96df"></div><div class="abs dk" style="left:20.7px;top:309px;width:10px;height:7.6px"></div><div class="abs wh" style="left:48.7px;top:309.2px;width:17px;height:7px"></div><div class="abs wh" style="left:74.7px;top:309.2px;width:38px;height:7px"></div><div class="abs dk" style="left:20.7px;top:327px;width:13px;height:7.8px"></div><div class="abs dk" style="left:47.7px;top:327px;width:13px;height:7.8px"></div><div class="abs dk" style="left:74.7px;top:327px;width:78px;height:7.8px"></div><div class="blk" style="left:20.7px;top:310px;width:173px;height:23px;border-width:5px 2px 5px 2px"></div>
<div class="abs" style="left:565.0px;top:305px;width:458.20000000000005px;height:39px;background:#eef6ff"></div><div class="abs" style="left:565.0px;top:305px;width:70.0px;height:17px;background:#fbf5f9"></div><div class="abs" style="left:635.0px;top:305px;width:388.20000000000005px;height:17px;background:#7b96df"></div><div class="abs" style="left:565.0px;top:305px;width:1px;height:39px;background:#aab3d8"></div><div class="abs" style="left:703.2px;top:305px;width:1px;height:39px;background:rgba(214,220,244,.85)"></div><div class="abs" style="left:634.5px;top:322px;width:1px;height:22px;background:#dfe3f5"></div><div class="abs" style="left:566.0px;top:322px;width:457.20000000000005px;height:1px;background:#e3e6f7"></div><div class="abs" style="left:569.0px;top:307px;width:9px;height:13px;line-height:13px;overflow:hidden;letter-spacing:0">B</div><div class="abs" style="left:568.5px;top:324.5px;width:9px;height:13px;line-height:13px;overflow:hidden;letter-spacing:0">M</div><div class="abs dk2" style="left:576.5px;top:310px;width:23px;height:7.6px"></div><div class="abs wh2" style="left:637.5px;top:310.2px;width:45px;height:7px"></div><div class="abs wh2" style="left:705.5px;top:310.2px;width:95px;height:7px"></div><div class="abs dk2" style="left:575.5px;top:328px;width:30px;height:7.8px"></div><div class="abs dk2" style="left:637.5px;top:328px;width:36px;height:7.8px"></div><div class="abs dk2" style="left:705.5px;top:328px;width:197px;height:7.8px"></div><div class="blk" style="left:572.5px;top:311px;width:428.5px;height:23px;border-width:5px"></div>
<div class="abs" style="left:20px;top:343px;width:182px;height:33px;background:#eef6ff"></div><div class="abs" style="left:20px;top:343px;width:27.200000000000003px;height:15px;background:#fbf5f9"></div><div class="abs" style="left:47.2px;top:343px;width:154.8px;height:15px;background:#7b96df"></div><div class="abs" style="left:46.7px;top:358px;width:1px;height:18px;background:#dfe3f5"></div><div class="abs dk" style="left:21.7px;top:346px;width:10px;height:7.6px"></div><div class="abs wh" style="left:49.7px;top:346.2px;width:17px;height:7px"></div><div class="abs wh" style="left:75.7px;top:346.2px;width:38px;height:7px"></div><div class="abs dk" style="left:21.7px;top:364px;width:13px;height:7.8px"></div><div class="abs dk" style="left:48.7px;top:364px;width:13px;height:7.8px"></div><div class="abs dk" style="left:75.7px;top:364px;width:78px;height:7.8px"></div><div class="blk" style="left:21.7px;top:347px;width:174px;height:23px;border-width:5px 2px 5px 2px"></div>
<div class="abs" style="left:567.5px;top:344px;width:455.70000000000005px;height:33px;background:#eef6ff"></div><div class="abs" style="left:567.5px;top:344px;width:70.0px;height:15px;background:#fbf5f9"></div><div class="abs" style="left:637.5px;top:344px;width:385.70000000000005px;height:15px;background:#7b96df"></div><div class="abs" style="left:567.5px;top:344px;width:1px;height:33px;background:#aab3d8"></div><div class="abs" style="left:705.7px;top:344px;width:1px;height:33px;background:rgba(214,220,244,.85)"></div><div class="abs" style="left:637.0px;top:359px;width:1px;height:18px;background:#dfe3f5"></div><div class="abs" style="left:568.5px;top:359px;width:454.70000000000005px;height:1px;background:#e3e6f7"></div><div class="abs" style="left:571.5px;top:344px;width:9px;height:13px;line-height:13px;overflow:hidden;letter-spacing:0">B</div><div class="abs" style="left:571px;top:361.5px;width:9px;height:13px;line-height:13px;overflow:hidden;letter-spacing:0">M</div><div class="abs dk2" style="left:579px;top:347px;width:23px;height:7.6px"></div><div class="abs wh2" style="left:640px;top:347.2px;width:45px;height:7px"></div><div class="abs wh2" style="left:708px;top:347.2px;width:95px;height:7px"></div><div class="abs dk2" style="left:578px;top:365px;width:30px;height:7.8px"></div><div class="abs dk2" style="left:640px;top:365px;width:36px;height:7.8px"></div><div class="abs dk2" style="left:708px;top:365px;width:197px;height:7.8px"></div><div class="blk" style="left:575px;top:348px;width:428.5px;height:23px;border-width:5px"></div>
<div class="abs" style="left:20px;top:376px;width:182px;height:36px;background:#eef6ff"></div><div class="abs" style="left:20px;top:376px;width:27.200000000000003px;height:17px;background:#fbf5f9"></div><div class="abs" style="left:47.2px;top:376px;width:154.8px;height:17px;background:#7b96df"></div><div class="abs" style="left:46.7px;top:393px;width:1px;height:19px;background:#dfe3f5"></div><div class="abs dk" style="left:21.7px;top:381px;width:10px;height:7.6px"></div><div class="abs wh" style="left:49.7px;top:381.2px;width:17px;height:7px"></div><div class="abs wh" style="left:75.7px;top:381.2px;width:38px;height:7px"></div><div class="abs dk" style="left:21.7px;top:399px;width:13px;height:7.8px"></div><div class="abs dk" style="left:48.7px;top:399px;width:13px;height:7.8px"></div><div class="abs dk" style="left:75.7px;top:399px;width:78px;height:7.8px"></div><div class="blk" style="left:21.7px;top:382px;width:174px;height:23px;border-width:5px 2px 5px 2px"></div>
<div class="abs" style="left:567.5px;top:377px;width:455.70000000000005px;height:36px;background:#eef6ff"></div><div class="abs" style="left:567.5px;top:377px;width:70.0px;height:17px;background:#fbf5f9"></div><div class="abs" style="left:637.5px;top:377px;width:385.70000000000005px;height:17px;background:#7b96df"></div><div class="abs" style="left:567.5px;top:377px;width:1px;height:36px;background:#aab3d8"></div><div class="abs" style="left:705.7px;top:377px;width:1px;height:36px;background:rgba(214,220,244,.85)"></div><div class="abs" style="left:637.0px;top:394px;width:1px;height:19px;background:#dfe3f5"></div><div class="abs" style="left:568.5px;top:394px;width:454.70000000000005px;height:1px;background:#e3e6f7"></div><div class="abs" style="left:571.5px;top:379px;width:9px;height:13px;line-height:13px;overflow:hidden;letter-spacing:0">B</div><div class="abs" style="left:571px;top:396.5px;width:9px;height:13px;line-height:13px;overflow:hidden;letter-spacing:0">M</div><div class="abs dk2" style="left:579px;top:382px;width:23px;height:7.6px"></div><div class="abs wh2" style="left:640px;top:382.2px;width:45px;height:7px"></div><div class="abs wh2" style="left:708px;top:382.2px;width:95px;height:7px"></div><div class="abs dk2" style="left:578px;top:400px;width:30px;height:7.8px"></div><div class="abs dk2" style="left:640px;top:400px;width:36px;height:7.8px"></div><div class="abs dk2" style="left:708px;top:400px;width:197px;height:7.8px"></div><div class="blk" style="left:575px;top:383px;width:428.5px;height:23px;border-width:5px"></div>
<div class="abs" style="left:20px;top:412px;width:182px;height:39px;background:#eef6ff"></div><div class="abs" style="left:20px;top:412px;width:26.200000000000003px;height:21px;background:#fbf5f9"></div><div class="abs" style="left:46.2px;top:412px;width:155.8px;height:21px;background:#7b96df"></div><div class="abs" style="left:45.7px;top:433px;width:1px;height:18px;background:#dfe3f5"></div><div class="abs" style="left:73.7px;top:416px;width:1px;height:39px;background:rgba(220,225,245,.8)"></div><div class="abs" style="left:20px;top:415.5px;width:182px;height:1px;background:#8f95b0"></div><div class="abs dk" style="left:20.7px;top:421px;width:10px;height:7.6px"></div><div class="abs wh" style="left:48.7px;top:421.2px;width:17px;height:7px"></div><div class="abs wh" style="left:74.7px;top:421.2px;width:38px;height:7px"></div><div class="abs dk" style="left:20.7px;top:439px;width:13px;height:7.8px"></div><div class="abs dk" style="left:47.7px;top:439px;width:13px;height:7.8px"></div><div class="abs dk" style="left:74.7px;top:439px;width:78px;height:7.8px"></div><div class="blk" style="left:20.7px;top:422px;width:174px;height:23px;border-width:5px 2px 5px 2px"></div>
<div class="abs" style="left:565.7px;top:413px;width:457.5px;height:39px;background:#eef6ff"></div><div class="abs" style="left:565.7px;top:413px;width:70.0px;height:21px;background:#fbf5f9"></div><div class="abs" style="left:635.7px;top:413px;width:387.5px;height:21px;background:#7b96df"></div><div class="abs" style="left:565.7px;top:413px;width:1px;height:39px;background:#aab3d8"></div><div class="abs" style="left:703.9000000000001px;top:413px;width:1px;height:39px;background:rgba(214,220,244,.85)"></div><div class="abs" style="left:635.2px;top:434px;width:1px;height:18px;background:#dfe3f5"></div><div class="abs" style="left:566.7px;top:434px;width:456.5px;height:1px;background:#e3e6f7"></div><div class="abs" style="left:565.7px;top:416.5px;width:457.5px;height:1px;background:#8f95b0"></div><div class="abs" style="left:569.7px;top:419px;width:9px;height:13px;line-height:13px;overflow:hidden;letter-spacing:0">B</div><div class="abs" style="left:569.2px;top:436.5px;width:9px;height:13px;line-height:13px;overflow:hidden;letter-spacing:0">M</div><div class="abs dk2" style="left:577.2px;top:422px;width:23px;height:7.6px"></div><div class="abs wh2" style="left:638.2px;top:422.2px;width:45px;height:7px"></div><div class="abs wh2" style="left:706.2px;top:422.2px;width:95px;height:7px"></div><div class="abs dk2" style="left:576.2px;top:440px;width:30px;height:7.8px"></div><div class="abs dk2" style="left:638.2px;top:440px;width:36px;height:7.8px"></div><div class="abs dk2" style="left:706.2px;top:440px;width:197px;height:7.8px"></div><div class="blk" style="left:573.2px;top:423px;width:428.5px;height:23px;border-width:5px"></div>
<div class="abs" style="left:20px;top:451px;width:182px;height:36px;background:#eef6ff"></div><div class="abs" style="left:20px;top:451px;width:26.200000000000003px;height:17px;background:#fbf5f9"></div><div class="abs" style="left:46.2px;top:451px;width:155.8px;height:17px;background:#7b96df"></div><div class="abs" style="left:45.7px;top:468px;width:1px;height:19px;background:#dfe3f5"></div><div class="abs" style="left:73.7px;top:451px;width:1px;height:36px;background:rgba(220,225,245,.8)"></div><div class="abs dk" style="left:20.7px;top:456px;width:10px;height:7.6px"></div><div class="abs wh" style="left:48.7px;top:456.2px;width:17px;height:7px"></div><div class="abs wh" style="left:74.7px;top:456.2px;width:38px;height:7px"></div><div class="abs dk" style="left:20.7px;top:474px;width:13px;height:7.8px"></div><div class="abs dk" style="left:47.7px;top:474px;width:13px;height:7.8px"></div><div class="abs dk" style="left:74.7px;top:474px;width:78px;height:7.8px"></div><div class="blk" style="left:20.7px;top:457px;width:174px;height:23px;border-width:5px 2px 5px 2px"></div>
<div class="abs" style="left:565.7px;top:452px;width:457.5px;height:36px;background:#eef6ff"></div><div class="abs" style="left:565.7px;top:452px;width:70.0px;height:17px;background:#fbf5f9"></div><div class="abs" style="left:635.7px;top:452px;width:387.5px;height:17px;background:#7b96df"></div><div class="abs" style="left:565.7px;top:452px;width:1px;height:36px;background:#aab3d8"></div><div class="abs" style="left:703.9000000000001px;top:452px;width:1px;height:36px;background:rgba(214,220,244,.85)"></div><div class="abs" style="left:635.2px;top:469px;width:1px;height:19px;background:#dfe3f5"></div><div class="abs" style="left:566.7px;top:469px;width:456.5px;height:1px;background:#e3e6f7"></div><div class="abs" style="left:569.7px;top:454px;width:9px;height:13px;line-height:13px;overflow:hidden;letter-spacing:0">B</div><div class="abs" style="left:569.2px;top:471.5px;width:9px;height:13px;line-height:13px;overflow:hidden;letter-spacing:0">M</div><div class="abs dk2" style="left:577.2px;top:457px;width:23px;height:7.6px"></div><div class="abs wh2" style="left:638.2px;top:457.2px;width:45px;height:7px"></div><div class="abs wh2" style="left:706.2px;top:457.2px;width:95px;height:7px"></div><div class="abs dk2" style="left:576.2px;top:475px;width:30px;height:7.8px"></div><div class="abs dk2" style="left:638.2px;top:475px;width:36px;height:7.8px"></div><div class="abs dk2" style="left:706.2px;top:475px;width:197px;height:7.8px"></div><div class="blk" style="left:573.2px;top:458px;width:428.5px;height:23px;border-width:5px"></div>
<div class="abs" style="left:20px;top:487px;width:182px;height:34px;background:#eef6ff"></div><div class="abs" style="left:20px;top:487px;width:26.200000000000003px;height:17px;background:#fbf5f9"></div><div class="abs" style="left:46.2px;top:487px;width:155.8px;height:17px;background:#7b96df"></div><div class="abs" style="left:45.7px;top:504px;width:1px;height:17px;background:#dfe3f5"></div><div class="abs" style="left:73.7px;top:487px;width:1px;height:34px;background:rgba(220,225,245,.8)"></div><div class="abs dk" style="left:20.7px;top:492px;width:10px;height:7.6px"></div><div class="abs wh" style="left:48.7px;top:492.2px;width:17px;height:7px"></div><div class="abs wh" style="left:74.7px;top:492.2px;width:38px;height:7px"></div><div class="abs dk" style="left:20.7px;top:510px;width:13px;height:7.8px"></div><div class="abs dk" style="left:47.7px;top:510px;width:13px;height:7.8px"></div><div class="abs dk" style="left:74.7px;top:510px;width:78px;height:7.8px"></div><div class="blk" style="left:20.7px;top:493px;width:174px;height:23px;border-width:5px 2px 5px 2px"></div>
<div class="abs" style="left:565.7px;top:488px;width:457.5px;height:34px;background:#eef6ff"></div><div class="abs" style="left:565.7px;top:488px;width:70.0px;height:17px;background:#fbf5f9"></div><div class="abs" style="left:635.7px;top:488px;width:387.5px;height:17px;background:#7b96df"></div><div class="abs" style="left:565.7px;top:488px;width:1px;height:34px;background:#aab3d8"></div><div class="abs" style="left:703.9000000000001px;top:488px;width:1px;height:34px;background:rgba(214,220,244,.85)"></div><div class="abs" style="left:635.2px;top:505px;width:1px;height:17px;background:#dfe3f5"></div><div class="abs" style="left:566.7px;top:505px;width:456.5px;height:1px;background:#e3e6f7"></div><div class="abs" style="left:569.7px;top:490px;width:9px;height:13px;line-height:13px;overflow:hidden;letter-spacing:0">B</div><div class="abs" style="left:569.2px;top:507.5px;width:9px;height:13px;line-height:13px;overflow:hidden;letter-spacing:0">M</div><div class="abs dk2" style="left:577.2px;top:493px;width:23px;height:7.6px"></div><div class="abs wh2" style="left:638.2px;top:493.2px;width:45px;height:7px"></div><div class="abs wh2" style="left:706.2px;top:493.2px;width:95px;height:7px"></div><div class="abs dk2" style="left:576.2px;top:511px;width:30px;height:7.8px"></div><div class="abs dk2" style="left:638.2px;top:511px;width:36px;height:7.8px"></div><div class="abs dk2" style="left:706.2px;top:511px;width:197px;height:7.8px"></div><div class="blk" style="left:573.2px;top:494px;width:428.5px;height:23px;border-width:5px"></div>
<div class="abs" style="left:20px;top:521px;width:182px;height:35px;background:#eef6ff"></div><div class="abs" style="left:20px;top:521px;width:26.200000000000003px;height:17px;background:#fbf5f9"></div><div class="abs" style="left:46.2px;top:521px;width:155.8px;height:17px;background:#7b96df"></div><div class="abs" style="left:45.7px;top:538px;width:1px;height:18px;background:#dfe3f5"></div><div class="abs" style="left:73.7px;top:521px;width:1px;height:35px;background:rgba(220,225,245,.8)"></div><div class="abs dk" style="left:20.7px;top:526px;width:10px;height:7.6px"></div><div class="abs wh" style="left:48.7px;top:526.2px;width:17px;height:7px"></div><div class="abs wh" style="left:74.7px;top:526.2px;width:38px;height:7px"></div><div class="abs dk" style="left:20.7px;top:544px;width:13px;height:7.8px"></div><div class="abs dk" style="left:47.7px;top:544px;width:13px;height:7.8px"></div><div class="abs dk" style="left:74.7px;top:544px;width:78px;height:7.8px"></div><div class="blk" style="left:20.7px;top:527px;width:174px;height:23px;border-width:5px 2px 5px 2px"></div>
<div class="abs" style="left:565.7px;top:522px;width:457.5px;height:35px;background:#eef6ff"></div><div class="abs" style="left:565.7px;top:522px;width:70.0px;height:17px;background:#fbf5f9"></div><div class="abs" style="left:635.7px;top:522px;width:387.5px;height:17px;background:#7b96df"></div><div class="abs" style="left:565.7px;top:522px;width:1px;height:35px;background:#aab3d8"></div><div class="abs" style="left:703.9000000000001px;top:522px;width:1px;height:35px;background:rgba(214,220,244,.85)"></div><div class="abs" style="left:635.2px;top:539px;width:1px;height:18px;background:#dfe3f5"></div><div class="abs" style="left:566.7px;top:539px;width:456.5px;height:1px;background:#e3e6f7"></div><div class="abs" style="left:569.7px;top:524px;width:9px;height:13px;line-height:13px;overflow:hidden;letter-spacing:0">B</div><div class="abs" style="left:569.2px;top:541.5px;width:9px;height:13px;line-height:13px;overflow:hidden;letter-spacing:0">M</div><div class="abs dk2" style="left:577.2px;top:527px;width:23px;height:7.6px"></div><div class="abs wh2" style="left:638.2px;top:527.2px;width:45px;height:7px"></div><div class="abs wh2" style="left:706.2px;top:527.2px;width:95px;height:7px"></div><div class="abs dk2" style="left:576.2px;top:545px;width:30px;height:7.8px"></div><div class="abs dk2" style="left:638.2px;top:545px;width:36px;height:7.8px"></div><div class="abs dk2" style="left:706.2px;top:545px;width:197px;height:7.8px"></div><div class="blk" style="left:573.2px;top:528px;width:428.5px;height:23px;border-width:5px"></div>
<div class="abs" style="left:20px;top:556px;width:182px;height:36px;background:#eef6ff"></div><div class="abs" style="left:20px;top:556px;width:26.200000000000003px;height:17px;background:#fbf5f9"></div><div class="abs" style="left:46.2px;top:556px;width:155.8px;height:17px;background:#7b96df"></div><div class="abs" style="left:45.7px;top:573px;width:1px;height:19px;background:#dfe3f5"></div><div class="abs" style="left:73.7px;top:556px;width:1px;height:36px;background:rgba(220,225,245,.8)"></div><div class="abs dk" style="left:20.7px;top:561px;width:10px;height:7.6px"></div><div class="abs wh" style="left:48.7px;top:561.2px;width:17px;height:7px"></div><div class="abs wh" style="left:74.7px;top:561.2px;width:38px;height:7px"></div><div class="abs dk" style="left:20.7px;top:579px;width:13px;height:7.8px"></div><div class="abs dk" style="left:47.7px;top:579px;width:13px;height:7.8px"></div><div class="abs dk" style="left:74.7px;top:579px;width:78px;height:7.8px"></div><div class="blk" style="left:20.7px;top:562px;width:174px;height:23px;border-width:5px 2px 5px 2px"></div>
<div class="abs" style="left:565.7px;top:557px;width:457.5px;height:36px;background:#eef6ff"></div><div class="abs" style="left:565.7px;top:557px;width:70.0px;height:17px;background:#fbf5f9"></div><div class="abs" style="left:635.7px;top:557px;width:387.5px;height:17px;background:#7b96df"></div><div class="abs" style="left:565.7px;top:557px;width:1px;height:36px;background:#aab3d8"></div><div class="abs" style="left:703.9000000000001px;top:557px;width:1px;height:36px;background:rgba(214,220,244,.85)"></div><div class="abs" style="left:635.2px;top:574px;width:1px;height:19px;background:#dfe3f5"></div><div class="abs" style="left:566.7px;top:574px;width:456.5px;height:1px;background:#e3e6f7"></div><div class="abs" style="left:569.7px;top:559px;width:9px;height:13px;line-height:13px;overflow:hidden;letter-spacing:0">B</div><div class="abs" style="left:569.2px;top:576.5px;width:9px;height:13px;line-height:13px;overflow:hidden;letter-spacing:0">M</div><div class="abs dk2" style="left:577.2px;top:562px;width:23px;height:7.6px"></div><div class="abs wh2" style="left:638.2px;top:562.2px;width:45px;height:7px"></div><div class="abs wh2" style="left:706.2px;top:562.2px;width:95px;height:7px"></div><div class="abs dk2" style="left:576.2px;top:580px;width:30px;height:7.8px"></div><div class="abs dk2" style="left:638.2px;top:580px;width:36px;height:7.8px"></div><div class="abs dk2" style="left:706.2px;top:580px;width:197px;height:7.8px"></div><div class="blk" style="left:573.2px;top:563px;width:428.5px;height:23px;border-width:5px"></div>
<div class="abs" style="left:20px;top:592px;width:182px;height:39px;background:#eef6ff"></div><div class="abs" style="left:20px;top:592px;width:26.200000000000003px;height:17px;background:#fbf5f9"></div><div class="abs" style="left:46.2px;top:592px;width:155.8px;height:17px;background:#7b96df"></div><div class="abs" style="left:45.7px;top:609px;width:1px;height:22px;background:#dfe3f5"></div><div class="abs" style="left:73.7px;top:592px;width:1px;height:39px;background:rgba(220,225,245,.8)"></div><div class="abs dk" style="left:20.7px;top:597px;width:10px;height:7.6px"></div><div class="abs wh" style="left:48.7px;top:597.2px;width:17px;height:7px"></div><div class="abs wh" style="left:74.7px;top:597.2px;width:38px;height:7px"></div><div class="abs dk" style="left:20.7px;top:615px;width:13px;height:7.8px"></div><div class="abs dk" style="left:47.7px;top:615px;width:13px;height:7.8px"></div><div class="abs dk" style="left:74.7px;top:615px;width:78px;height:7.8px"></div><div class="blk" style="left:20.7px;top:598px;width:174px;height:23px;border-width:5px 2px 5px 2px"></div>
<div class="abs" style="left:565.7px;top:593px;width:457.5px;height:39px;background:#eef6ff"></div><div class="abs" style="left:565.7px;top:593px;width:70.0px;height:17px;background:#fbf5f9"></div><div class="abs" style="left:635.7px;top:593px;width:387.5px;height:17px;background:#7b96df"></div><div class="abs" style="left:565.7px;top:593px;width:1px;height:39px;background:#aab3d8"></div><div class="abs" style="left:703.9000000000001px;top:593px;width:1px;height:39px;background:rgba(214,220,244,.85)"></div><div class="abs" style="left:635.2px;top:610px;width:1px;height:22px;background:#dfe3f5"></div><div class="abs" style="left:566.7px;top:610px;width:456.5px;height:1px;background:#e3e6f7"></div><div class="abs" style="left:569.7px;top:595px;width:9px;height:13px;line-height:13px;overflow:hidden;letter-spacing:0">B</div><div class="abs" style="left:569.2px;top:612.5px;width:9px;height:13px;line-height:13px;overflow:hidden;letter-spacing:0">M</div><div class="abs dk2" style="left:577.2px;top:598px;width:23px;height:7.6px"></div><div class="abs wh2" style="left:638.2px;top:598.2px;width:45px;height:7px"></div><div class="abs wh2" style="left:706.2px;top:598.2px;width:95px;height:7px"></div><div class="abs dk2" style="left:576.2px;top:616px;width:30px;height:7.8px"></div><div class="abs dk2" style="left:638.2px;top:616px;width:36px;height:7.8px"></div><div class="abs dk2" style="left:706.2px;top:616px;width:197px;height:7.8px"></div><div class="blk" style="left:573.2px;top:599px;width:428.5px;height:23px;border-width:5px"></div>
<div class="abs" style="left:20px;top:631px;width:182px;height:33px;background:#eef6ff"></div><div class="abs" style="left:20px;top:631px;width:27.200000000000003px;height:15px;background:#fbf5f9"></div><div class="abs" style="left:47.2px;top:631px;width:154.8px;height:15px;background:#7b96df"></div><div class="abs" style="left:46.7px;top:646px;width:1px;height:18px;background:#dfe3f5"></div><div class="abs" style="left:74.7px;top:631px;width:1px;height:33px;background:rgba(220,225,245,.8)"></div><div class="abs dk" style="left:21.7px;top:634px;width:10px;height:7.6px"></div><div class="abs wh" style="left:49.7px;top:634.2px;width:17px;height:7px"></div><div class="abs wh" style="left:75.7px;top:634.2px;width:38px;height:7px"></div><div class="abs dk" style="left:21.7px;top:652px;width:13px;height:7.8px"></div><div class="abs dk" style="left:48.7px;top:652px;width:13px;height:7.8px"></div><div class="abs dk" style="left:75.7px;top:652px;width:78px;height:7.8px"></div><div class="blk" style="left:21.7px;top:635px;width:174px;height:23px;border-width:5px 2px 5px 2px"></div>
<div class="abs" style="left:569.1px;top:632px;width:454.1px;height:33px;background:#eef6ff"></div><div class="abs" style="left:569.1px;top:632px;width:70.0px;height:15px;background:#fbf5f9"></div><div class="abs" style="left:639.1px;top:632px;width:384.1px;height:15px;background:#7b96df"></div><div class="abs" style="left:569.1px;top:632px;width:1px;height:33px;background:#aab3d8"></div><div class="abs" style="left:707.3px;top:632px;width:1px;height:33px;background:rgba(214,220,244,.85)"></div><div class="abs" style="left:638.6px;top:647px;width:1px;height:18px;background:#dfe3f5"></div><div class="abs" style="left:570.1px;top:647px;width:453.1px;height:1px;background:#e3e6f7"></div><div class="abs" style="left:573.1px;top:632px;width:9px;height:13px;line-height:13px;overflow:hidden;letter-spacing:0">B</div><div class="abs" style="left:572.6px;top:649.5px;width:9px;height:13px;line-height:13px;overflow:hidden;letter-spacing:0">M</div><div class="abs dk2" style="left:580.6px;top:635px;width:23px;height:7.6px"></div><div class="abs wh2" style="left:641.6px;top:635.2px;width:45px;height:7px"></div><div class="abs wh2" style="left:709.6px;top:635.2px;width:95px;height:7px"></div><div class="abs dk2" style="left:579.6px;top:653px;width:30px;height:7.8px"></div><div class="abs dk2" style="left:641.6px;top:653px;width:36px;height:7.8px"></div><div class="abs dk2" style="left:709.6px;top:653px;width:197px;height:7.8px"></div><div class="blk" style="left:576.6px;top:636px;width:428.5px;height:23px;border-width:5px"></div>
<div class="abs" style="left:20px;top:664px;width:182px;height:36px;background:#eef6ff"></div><div class="abs" style="left:20px;top:664px;width:27.200000000000003px;height:17px;background:#fbf5f9"></div><div class="abs" style="left:47.2px;top:664px;width:154.8px;height:17px;background:#7b96df"></div><div class="abs" style="left:46.7px;top:681px;width:1px;height:19px;background:#dfe3f5"></div><div class="abs" style="left:74.7px;top:664px;width:1px;height:36px;background:rgba(220,225,245,.8)"></div><div class="abs dk" style="left:21.7px;top:669px;width:10px;height:7.6px"></div><div class="abs wh" style="left:49.7px;top:669.2px;width:17px;height:7px"></div><div class="abs wh" style="left:75.7px;top:669.2px;width:38px;height:7px"></div><div class="abs dk" style="left:21.7px;top:687px;width:13px;height:7.8px"></div><div class="abs dk" style="left:48.7px;top:687px;width:13px;height:7.8px"></div><div class="abs dk" style="left:75.7px;top:687px;width:78px;height:7.8px"></div><div class="blk" style="left:21.7px;top:670px;width:174px;height:23px;border-width:5px 2px 5px 2px"></div>
<div class="abs" style="left:569.1px;top:665px;width:454.1px;height:36px;background:#eef6ff"></div><div class="abs" style="left:569.1px;top:665px;width:70.0px;height:17px;background:#fbf5f9"></div><div class="abs" style="left:639.1px;top:665px;width:384.1px;height:17px;background:#7b96df"></div><div class="abs" style="left:569.1px;top:665px;width:1px;height:36px;background:#aab3d8"></div><div class="abs" style="left:707.3px;top:665px;width:1px;height:36px;background:rgba(214,220,244,.85)"></div><div class="abs" style="left:638.6px;top:682px;width:1px;height:19px;background:#dfe3f5"></div><div class="abs" style="left:570.1px;top:682px;width:453.1px;height:1px;background:#e3e6f7"></div><div class="abs" style="left:573.1px;top:667px;width:9px;height:13px;line-height:13px;overflow:hidden;letter-spacing:0">B</div><div class="abs" style="left:572.6px;top:684.5px;width:9px;height:13px;line-height:13px;overflow:hidden;letter-spacing:0">M</div><div class="abs dk2" style="left:580.6px;top:670px;width:23px;height:7.6px"></div><div class="abs wh2" style="left:641.6px;top:670.2px;width:45px;height:7px"></div><div class="abs wh2" style="left:709.6px;top:670.2px;width:95px;height:7px"></div><div class="abs dk2" style="left:579.6px;top:688px;width:30px;height:7.8px"></div><div class="abs dk2" style="left:641.6px;top:688px;width:36px;height:7.8px"></div><div class="abs dk2" style="left:709.6px;top:688px;width:197px;height:7.8px"></div><div class="blk" style="left:576.6px;top:671px;width:428.5px;height:23px;border-width:5px"></div>
<div class="abs" style="left:20px;top:700px;width:182px;height:34px;background:#eef6ff"></div><div class="abs" style="left:20px;top:700px;width:27.200000000000003px;height:17px;background:#fbf5f9"></div><div class="abs" style="left:47.2px;top:700px;width:154.8px;height:17px;background:#7b96df"></div><div class="abs" style="left:46.7px;top:717px;width:1px;height:17px;background:#dfe3f5"></div><div class="abs" style="left:74.7px;top:700px;width:1px;height:34px;background:rgba(220,225,245,.8)"></div><div class="abs dk" style="left:21.7px;top:705px;width:10px;height:7.6px"></div><div class="abs wh" style="left:49.7px;top:705.2px;width:17px;height:7px"></div><div class="abs wh" style="left:75.7px;top:705.2px;width:38px;height:7px"></div><div class="abs dk" style="left:21.7px;top:723px;width:13px;height:7.8px"></div><div class="abs dk" style="left:48.7px;top:723px;width:13px;height:7.8px"></div><div class="abs dk" style="left:75.7px;top:723px;width:78px;height:7.8px"></div><div class="blk" style="left:21.7px;top:706px;width:174px;height:23px;border-width:5px 2px 5px 2px"></div>
<div class="abs" style="left:569.1px;top:701px;width:454.1px;height:34px;background:#eef6ff"></div><div class="abs" style="left:569.1px;top:701px;width:70.0px;height:17px;background:#fbf5f9"></div><div class="abs" style="left:639.1px;top:701px;width:384.1px;height:17px;background:#7b96df"></div><div class="abs" style="left:569.1px;top:701px;width:1px;height:34px;background:#aab3d8"></div><div class="abs" style="left:707.3px;top:701px;width:1px;height:34px;background:rgba(214,220,244,.85)"></div><div class="abs" style="left:638.6px;top:718px;width:1px;height:17px;background:#dfe3f5"></div><div class="abs" style="left:570.1px;top:718px;width:453.1px;height:1px;background:#e3e6f7"></div><div class="abs" style="left:573.1px;top:703px;width:9px;height:13px;line-height:13px;overflow:hidden;letter-spacing:0">B</div><div class="abs" style="left:572.6px;top:720.5px;width:9px;height:13px;line-height:13px;overflow:hidden;letter-spacing:0">M</div><div class="abs dk2" style="left:580.6px;top:706px;width:23px;height:7.6px"></div><div class="abs wh2" style="left:641.6px;top:706.2px;width:45px;height:7px"></div><div class="abs wh2" style="left:709.6px;top:706.2px;width:95px;height:7px"></div><div class="abs dk2" style="left:579.6px;top:724px;width:30px;height:7.8px"></div><div class="abs dk2" style="left:641.6px;top:724px;width:36px;height:7.8px"></div><div class="abs dk2" style="left:709.6px;top:724px;width:197px;height:7.8px"></div><div class="blk" style="left:576.6px;top:707px;width:428.5px;height:23px;border-width:5px"></div>
<div class="abs" style="left:20px;top:734px;width:182px;height:35px;background:#eef6ff"></div><div class="abs" style="left:20px;top:734px;width:27.200000000000003px;height:17px;background:#fbf5f9"></div><div class="abs" style="left:47.2px;top:734px;width:154.8px;height:17px;background:#7b96df"></div><div class="abs" style="left:46.7px;top:751px;width:1px;height:18px;background:#dfe3f5"></div><div class="abs" style="left:74.7px;top:734px;width:1px;height:35px;background:rgba(220,225,245,.8)"></div><div class="abs dk" style="left:21.7px;top:739px;width:10px;height:7.6px"></div><div class="abs wh" style="left:49.7px;top:739.2px;width:17px;height:7px"></div><div class="abs wh" style="left:75.7px;top:739.2px;width:38px;height:7px"></div><div class="abs dk" style="left:21.7px;top:757px;width:13px;height:7.8px"></div><div class="abs dk" style="left:48.7px;top:757px;width:13px;height:7.8px"></div><div class="abs dk" style="left:75.7px;top:757px;width:78px;height:7.8px"></div><div class="blk" style="left:21.7px;top:740px;width:174px;height:23px;border-width:5px 2px 5px 2px"></div>
<div class="abs" style="left:569.1px;top:735px;width:454.1px;height:35px;background:#eef6ff"></div><div class="abs" style="left:569.1px;top:735px;width:70.0px;height:17px;background:#fbf5f9"></div><div class="abs" style="left:639.1px;top:735px;width:384.1px;height:17px;background:#7b96df"></div><div class="abs" style="left:569.1px;top:735px;width:1px;height:35px;background:#aab3d8"></div><div class="abs" style="left:707.3px;top:735px;width:1px;height:35px;background:rgba(214,220,244,.85)"></div><div class="abs" style="left:638.6px;top:752px;width:1px;height:18px;background:#dfe3f5"></div><div class="abs" style="left:570.1px;top:752px;width:453.1px;height:1px;background:#e3e6f7"></div><div class="abs" style="left:573.1px;top:737px;width:9px;height:13px;line-height:13px;overflow:hidden;letter-spacing:0">B</div><div class="abs" style="left:572.6px;top:754.5px;width:9px;height:13px;line-height:13px;overflow:hidden;letter-spacing:0">M</div><div class="abs dk2" style="left:580.6px;top:740px;width:23px;height:7.6px"></div><div class="abs wh2" style="left:641.6px;top:740.2px;width:45px;height:7px"></div><div class="abs wh2" style="left:709.6px;top:740.2px;width:95px;height:7px"></div><div class="abs dk2" style="left:579.6px;top:758px;width:30px;height:7.8px"></div><div class="abs dk2" style="left:641.6px;top:758px;width:36px;height:7.8px"></div><div class="abs dk2" style="left:709.6px;top:758px;width:197px;height:7.8px"></div><div class="blk" style="left:576.6px;top:741px;width:428.5px;height:23px;border-width:5px"></div>
<div class="abs" style="left:20px;top:769px;width:182px;height:36px;background:#eef6ff"></div><div class="abs" style="left:20px;top:769px;width:27.200000000000003px;height:17px;background:#fbf5f9"></div><div class="abs" style="left:47.2px;top:769px;width:154.8px;height:17px;background:#7b96df"></div><div class="abs" style="left:46.7px;top:786px;width:1px;height:19px;background:#dfe3f5"></div><div class="abs" style="left:74.7px;top:769px;width:1px;height:36px;background:rgba(220,225,245,.8)"></div><div class="abs dk" style="left:21.7px;top:774px;width:10px;height:7.6px"></div><div class="abs wh" style="left:49.7px;top:774.2px;width:17px;height:7px"></div><div class="abs wh" style="left:75.7px;top:774.2px;width:38px;height:7px"></div><div class="abs dk" style="left:21.7px;top:792px;width:13px;height:7.8px"></div><div class="abs dk" style="left:48.7px;top:792px;width:13px;height:7.8px"></div><div class="abs dk" style="left:75.7px;top:792px;width:78px;height:7.8px"></div><div class="blk" style="left:21.7px;top:775px;width:174px;height:23px;border-width:5px 2px 5px 2px"></div>
<div class="abs" style="left:569.1px;top:770px;width:454.1px;height:36px;background:#eef6ff"></div><div class="abs" style="left:569.1px;top:770px;width:70.0px;height:17px;background:#fbf5f9"></div><div class="abs" style="left:639.1px;top:770px;width:384.1px;height:17px;background:#7b96df"></div><div class="abs" style="left:569.1px;top:770px;width:1px;height:36px;background:#aab3d8"></div><div class="abs" style="left:707.3px;top:770px;width:1px;height:36px;background:rgba(214,220,244,.85)"></div><div class="abs" style="left:638.6px;top:787px;width:1px;height:19px;background:#dfe3f5"></div><div class="abs" style="left:570.1px;top:787px;width:453.1px;height:1px;background:#e3e6f7"></div><div class="abs" style="left:573.1px;top:772px;width:9px;height:13px;line-height:13px;overflow:hidden;letter-spacing:0">B</div><div class="abs" style="left:572.6px;top:789.5px;width:9px;height:13px;line-height:13px;overflow:hidden;letter-spacing:0">M</div><div class="abs dk2" style="left:580.6px;top:775px;width:23px;height:7.6px"></div><div class="abs wh2" style="left:641.6px;top:775.2px;width:45px;height:7px"></div><div class="abs wh2" style="left:709.6px;top:775.2px;width:95px;height:7px"></div><div class="abs dk2" style="left:579.6px;top:793px;width:30px;height:7.8px"></div><div class="abs dk2" style="left:641.6px;top:793px;width:36px;height:7.8px"></div><div class="abs dk2" style="left:709.6px;top:793px;width:197px;height:7.8px"></div><div class="blk" style="left:576.6px;top:776px;width:428.5px;height:23px;border-width:5px"></div>
<div class="abs" style="left:20px;top:805px;width:182px;height:36px;background:#eef6ff"></div><div class="abs" style="left:20px;top:805px;width:27.200000000000003px;height:17px;background:#fbf5f9"></div><div class="abs" style="left:47.2px;top:805px;width:154.8px;height:17px;background:#7b96df"></div><div class="abs" style="left:46.7px;top:822px;width:1px;height:19px;background:#dfe3f5"></div><div class="abs" style="left:74.7px;top:805px;width:1px;height:36px;background:rgba(220,225,245,.8)"></div><div class="abs dk" style="left:21.7px;top:810px;width:10px;height:7.6px"></div><div class="abs wh" style="left:49.7px;top:810.2px;width:17px;height:7px"></div><div class="abs wh" style="left:75.7px;top:810.2px;width:38px;height:7px"></div><div class="abs dk" style="left:21.7px;top:828px;width:13px;height:7.8px"></div><div class="abs dk" style="left:48.7px;top:828px;width:13px;height:7.8px"></div><div class="abs dk" style="left:75.7px;top:828px;width:78px;height:7.8px"></div><div class="blk" style="left:21.7px;top:811px;width:174px;height:23px;border-width:5px 2px 5px 2px"></div>
<div class="abs" style="left:569.1px;top:806px;width:454.1px;height:35px;background:#eef6ff"></div><div class="abs" style="left:569.1px;top:806px;width:70.0px;height:17px;background:#fbf5f9"></div><div class="abs" style="left:639.1px;top:806px;width:384.1px;height:17px;background:#7b96df"></div><div class="abs" style="left:569.1px;top:806px;width:1px;height:35px;background:#aab3d8"></div><div class="abs" style="left:707.3px;top:806px;width:1px;height:35px;background:rgba(214,220,244,.85)"></div><div class="abs" style="left:638.6px;top:823px;width:1px;height:18px;background:#dfe3f5"></div><div class="abs" style="left:570.1px;top:823px;width:453.1px;height:1px;background:#e3e6f7"></div><div class="abs" style="left:573.1px;top:808px;width:9px;height:13px;line-height:13px;overflow:hidden;letter-spacing:0">B</div><div class="abs" style="left:572.6px;top:825.5px;width:9px;height:13px;line-height:13px;overflow:hidden;letter-spacing:0">M</div><div class="abs dk2" style="left:580.6px;top:811px;width:23px;height:7.6px"></div><div class="abs wh2" style="left:641.6px;top:811.2px;width:45px;height:7px"></div><div class="abs wh2" style="left:709.6px;top:811.2px;width:95px;height:7px"></div><div class="abs dk2" style="left:579.6px;top:829px;width:30px;height:7.8px"></div><div class="abs dk2" style="left:641.6px;top:829px;width:36px;height:7.8px"></div><div class="abs dk2" style="left:709.6px;top:829px;width:197px;height:7.8px"></div><div class="blk" style="left:576.6px;top:812px;width:428.5px;height:23px;border-width:5px"></div>
<div class="abs" style="left:565px;top:129px;width:1px;height:712px;background:#9aa4cf"></div>
<div class="abs dk" style="left:22px;top:839.3px;width:48px;height:1.7px"></div>
<div class="abs dk" style="left:92px;top:839.3px;width:46px;height:1.7px"></div>
<div class="abs dk" style="left:573px;top:839.3px;width:39px;height:1.7px"></div>
</div></div>
<div class="abs" style="left:20px;top:123px;width:1445px;height:6px;border:1px solid #8f9ac9;border-left:0;background:linear-gradient(#fff,#f4f5fa 40%,#d9dcea)"></div>
<div class="abs" style="left:1024px;top:273px;line-height:17px">i.</div>
<div class="abs" style="left:1024px;top:453px;line-height:17px">N.</div>
<div class="abs ft" style="left:9px;top:841px;width:1456px;height:26px"></div>
<div class="abs sum" style="left:1207px;top:844px;width:126px">303.247,25</div>
<div class="abs sum" style="left:1337px;top:844px;width:125px">322.740,60</div>
<div class="abs nav" style="left:9px;top:867px;width:1904px"><div class="abs" style="left:0;top:0;width:115.5px;height:21px;background:#fff"></div><div class="abs nb" style="left:0.2px"><svg width="12" height="13" viewBox="0 0 12 13"><path d="M5.8 3.2v6.8L1.4 6.6zM10.3 3.2v6.8L5.9 6.6z" fill="#9d9da6"/></svg></div><div class="abs nb" style="left:17.3px"><svg width="12" height="13" viewBox="0 0 12 13"><path d="M7.7 3.2v6.8L3 6.6z" fill="#9d9da6"/></svg></div><div class="abs" style="left:39px;top:0;height:21px;line-height:23px;letter-spacing:-0.45px">1 of 542</div><div class="abs nb a" style="left:83.3px"><svg width="12" height="13" viewBox="0 0 12 13"><path d="M4.5 3.2v6.8L9.3 6.6z" fill="#1f55a5"/></svg></div><div class="abs nb a" style="left:100.3px"><svg width="12" height="13" viewBox="0 0 12 13"><path d="M1.8 3.2v6.8L5.2 6.6zM5.2 3.2v6.8L8.6 6.6zM8.6 3.2h1.4v6.8H8.6z" fill="#1f55a5"/></svg></div></div>
<div class="abs" style="left:9px;top:887px;width:1904px;height:2px;background:#b8c3e3"></div>
<div class="abs hd" style="left:9px;top:889px;width:11px;height:18px"></div>
<svg class="abs" style="left:10px;top:894px" width="9" height="9" viewBox="0 0 9 9"><path d="M4.5 1v7M1 4.5h7M2 2l5 5M7 2L2 7" stroke="#6f88c4" stroke-width="0.7" fill="none"/></svg>
<div class="abs hd" style="left:20px;top:889px;width:106px;height:18px;line-height:16px">Kasa Kodu</div>
<div class="abs hd" style="left:126px;top:889px;width:310px;height:18px;line-height:16px">Kasa Açıklaması</div>
<div class="abs hd" style="left:436px;top:889px;width:130px;height:18px;line-height:16px">Kasa Bakiyesi</div>
<div class="abs ind" style="top:907px;height:24px"></div>
<svg class="abs" style="left:9.8px;top:914px" width="8" height="10" viewBox="0 0 8 10"><path d="M0.9 1.7h6.2v2h-6.2zM1.3 3.7l1.9 2.3v2.8h1.6v-2.8l1.9-2.3" fill="#f4f6fc" stroke="#4a66b2" stroke-width="1.15"/></svg>
<div class="abs flt" style="left:20px;top:907px;width:546px;height:20px;line-height:19px">Filtrelemek İstediğiniz Alanı Seçip Buraya Yazınız ...</div>
<div class="abs" style="left:20px;top:926px;width:546px;height:5px;border:1px solid #8f9ac9;border-left:0;background:linear-gradient(#fff,#f4f5fa 40%,#d9dcea)"></div>
<div class="abs ind" style="top:931px;height:19px"></div><div class="abs ind" style="top:949px;height:19px"></div>
<div class="abs r s" style="left:20px;top:931px;width:546px"><div class="c" style="left:0;width:106px;border-left:0;background:#faf4f8;color:#000">100</div><div class="c" style="left:105px;width:311px"></div><div class="c n" style="left:415px;width:131px"><span class="lira">₺</span>33.443,05</div></div>
<div class="abs r o" style="left:20px;top:949px;width:546px;border-bottom:1px solid #d9dcf3;height:19px"><div class="c" style="left:0;width:106px;border-left:0">101</div><div class="c" style="left:105px;width:311px"></div><div class="c n" style="left:415px;width:131px"><span class="lira">₺</span>106,90</div></div>
<svg class="abs" style="left:11px;top:935px" width="7" height="11" viewBox="0 0 7 11"><path d="M1 1.8l4.2 3.9L1 9.6" stroke="#4a62b4" stroke-width="2" fill="none"/></svg>
<div class="abs" style="left:126px;top:928px;width:181px;height:18.299999999999955px;background:#eef6ff"></div><div class="abs" style="left:126px;top:928px;width:28px;height:8px;background:#fbf5f9"></div><div class="abs" style="left:154px;top:928px;width:153px;height:8px;background:#7b96df"></div><div class="abs" style="left:181px;top:928px;width:1px;height:18.299999999999955px;background:rgba(214,220,244,.85)"></div><div class="abs" style="left:126px;top:928px;width:1px;height:18.299999999999955px;background:#5b6fc0"></div><div class="blk" style="left:127px;top:929px;width:175px;height:14px;border-width:3.5px 2px 3px 2px"></div>
<div class="abs dk" style="left:128px;top:942.5px;width:12px;height:2.3px"></div>
<div class="abs dk" style="left:155px;top:942.5px;width:13px;height:2.3px"></div>
<div class="abs dk" style="left:183px;top:942.5px;width:79px;height:2.3px"></div>
<div class="abs" style="left:126px;top:946.3px;width:181px;height:20.700000000000045px;background:#eef6ff"></div><div class="abs" style="left:126px;top:946.3px;width:28px;height:10.700000000000045px;background:#fbf5f9"></div><div class="abs" style="left:154px;top:946.3px;width:153px;height:10.700000000000045px;background:#7b96df"></div><div class="abs" style="left:181px;top:946.3px;width:1px;height:20.700000000000045px;background:rgba(214,220,244,.85)"></div><div class="abs" style="left:126px;top:946.3px;width:1px;height:20.700000000000045px;background:#5b6fc0"></div><div class="blk" style="left:127px;top:951.3px;width:175px;height:14px;border-width:3.5px 2px 3px 2px"></div>
<div class="abs ft" style="left:9px;top:996px;width:557px;height:26px"></div>
<div class="abs sum" style="left:438px;top:999px;width:125px;height:21px;line-height:19px">33.549,95</div>
<div class="abs nav" style="left:9px;top:1022px;width:1904px"><div class="abs" style="left:0;top:0;width:103.5px;height:21px;background:#fff"></div><div class="abs nb" style="left:0.2px"><svg width="12" height="13" viewBox="0 0 12 13"><path d="M5.8 3.2v6.8L1.4 6.6zM10.3 3.2v6.8L5.9 6.6z" fill="#9d9da6"/></svg></div><div class="abs nb" style="left:17.3px"><svg width="12" height="13" viewBox="0 0 12 13"><path d="M7.7 3.2v6.8L3 6.6z" fill="#9d9da6"/></svg></div><div class="abs" style="left:39px;top:0;height:21px;line-height:23px;letter-spacing:-0.45px">1 of 2</div><div class="abs nb a" style="left:71.3px"><svg width="12" height="13" viewBox="0 0 12 13"><path d="M4.5 3.2v6.8L9.3 6.6z" fill="#1f55a5"/></svg></div><div class="abs nb a" style="left:88.3px"><svg width="12" height="13" viewBox="0 0 12 13"><path d="M1.8 3.2v6.8L5.2 6.6zM5.2 3.2v6.8L8.6 6.6zM8.6 3.2h1.4v6.8H8.6z" fill="#1f55a5"/></svg></div></div>
</body></html>
